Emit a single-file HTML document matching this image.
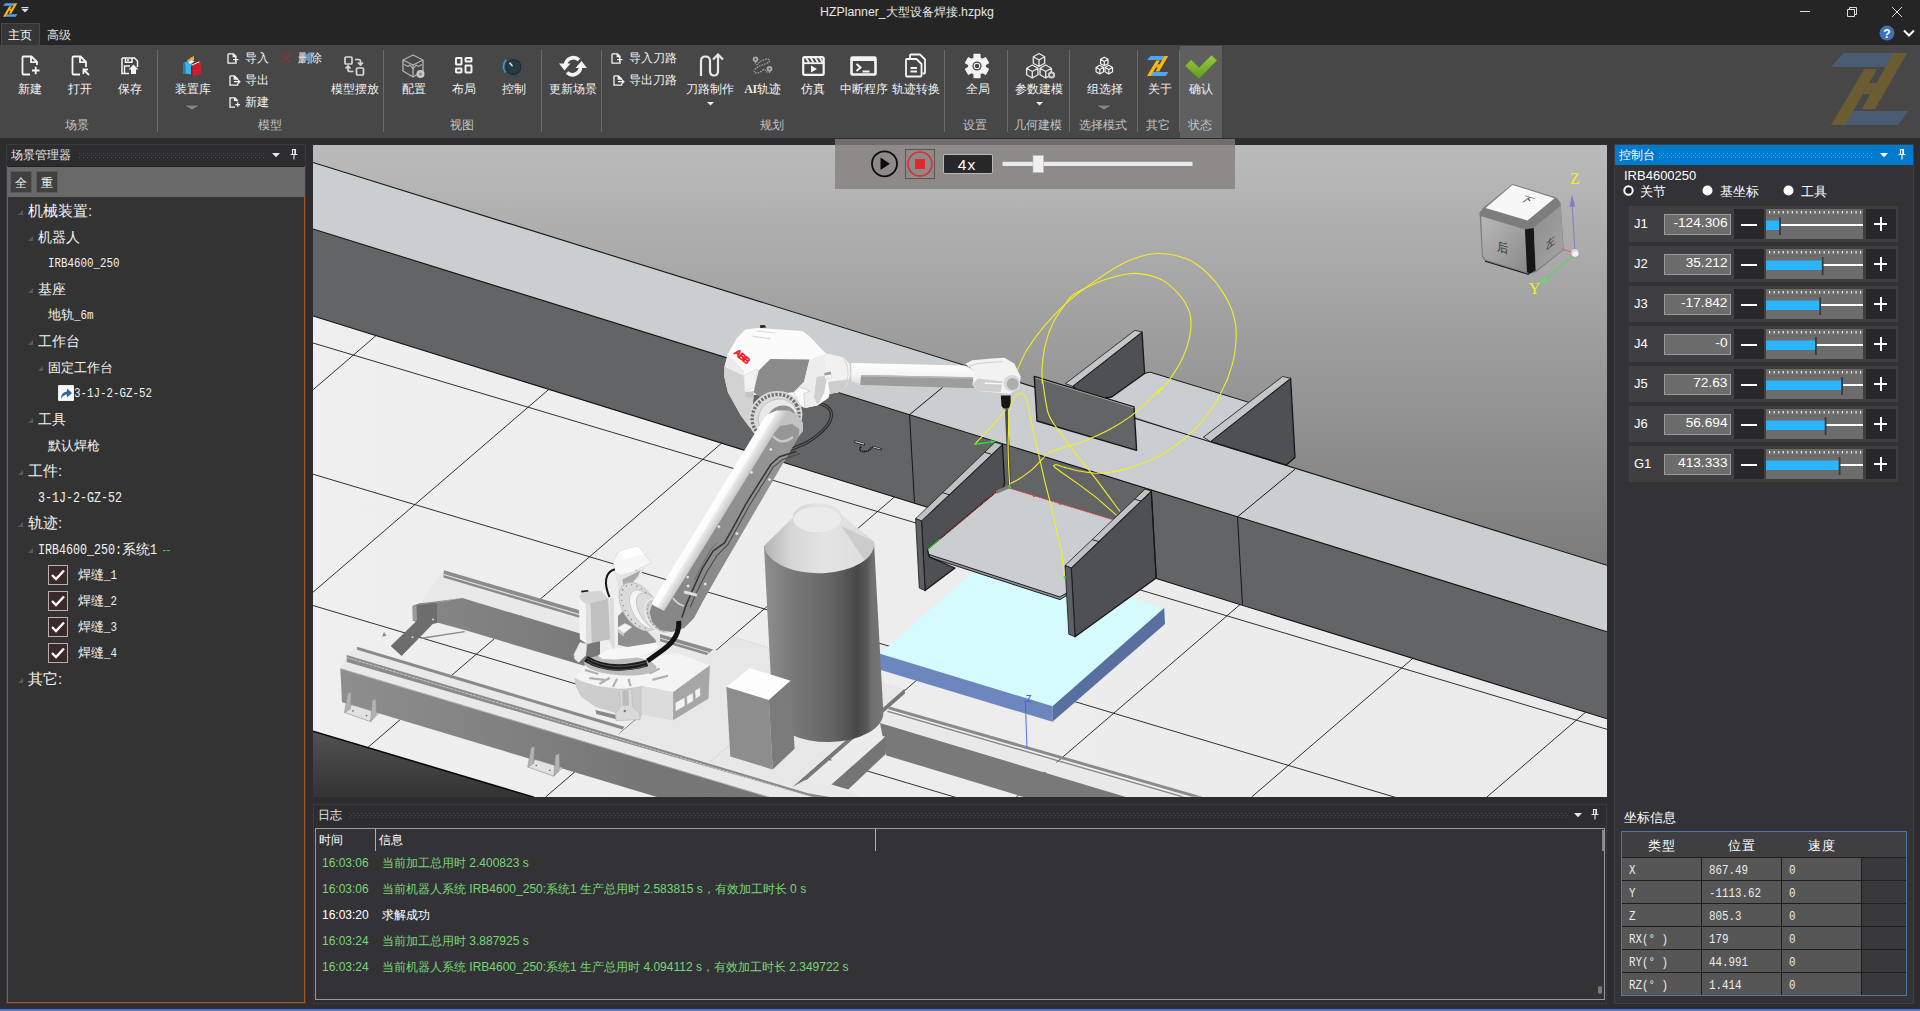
<!DOCTYPE html>
<html lang="zh"><head><meta charset="utf-8"><title>HZPlanner</title>
<style>

*{margin:0;padding:0;box-sizing:border-box}
html,body{width:1920px;height:1011px;overflow:hidden;background:#2d2d30}
body{position:relative;font-family:"Liberation Sans",sans-serif;font-size:13px;color:#f0f0f0;line-height:1}
.a{position:absolute}
.t{position:absolute;white-space:nowrap;line-height:1;transform:translateY(-50%)}
.tc{position:absolute;white-space:nowrap;line-height:1;transform:translate(-50%,-50%)}
.tr{position:absolute;white-space:nowrap;line-height:1;transform:translate(-100%,-50%)}
.mono{font-family:"Liberation Mono",monospace;display:inline-block;transform:scaleX(.833);transform-origin:0 50%}
svg{position:absolute;overflow:visible}
#titlebar{left:0;top:0;width:1920px;height:45px;background:#252526}
#ribbon{left:0;top:45px;width:1920px;height:93px;background:#474747}
.sep{position:absolute;top:50px;width:1px;height:82px;background:#6b6b6b}
.glabel{color:#c4c4c4;font-size:13px}
.blabel{color:#f2f2f2;font-size:13px}
.grip{position:absolute;height:5px;background-image:radial-gradient(circle at .5px .5px,#4b4b50 .55px,transparent .75px),radial-gradient(circle at .5px .5px,#4b4b50 .55px,transparent .75px);background-size:4px 4px,4px 4px;background-position:0 0,2px 2px}
.hdr{position:absolute;color:#e6e6e6;font-size:12px}
.jrow{position:absolute;left:1629px;width:269px;height:36px;background:#3f3f42}
.jval{position:absolute;left:35px;top:8px;width:67px;height:21px;background:#6c6c6c;border:1px solid #9a9a9a}
.jbtn{position:absolute;top:3px;width:30px;height:30px;background:#28282a}
.jsl{position:absolute;left:137px;top:3px;width:97px;height:30px;background:#6c6c6c}
.cb{position:absolute;left:48px;width:20px;height:20px;background:#3c2a2a;border:1px solid #b9b0b0}
.cell{position:absolute;height:22px;background:#565656}

</style></head>
<body>
<div id="titlebar" class="a"></div>
<svg style="left:3px;top:3px" width="14.5" height="14" viewBox="0 0 868 809"><g opacity="1"><polygon points="140,0 702,0 614,157 0,157" fill="#4da6f5"/><polygon points="250,652 868,652 753,809 159,809" fill="#4da6f5"/><polygon points="700,0 856,0 493,630 348,630" fill="#f9b913"/><polygon points="373,180 518,180 161,809 0,809" fill="#f9b913"/><polygon points="429,337 514,337 444,462 356,462" fill="#f9b913"/></g></svg>
<svg style="left:21px;top:7px" width="8" height="6" viewBox="0 0 8 6"><rect x="0.5" y="0" width="7" height="1.2" fill="#ddd"/><polygon points="0.5,2 7.5,2 4,5.6" fill="#ddd"/></svg>
<div class="tc " style="left:907px;top:12px;color:#e8e8e8;font-size:12.3px">HZPlanner_大型设备焊接.hzpkg</div>
<svg style="left:1799px;top:5px" width="110" height="16" viewBox="0 0 110 16"><path d="M1 6.5H11" stroke="#ddd" stroke-width="1"/><path d="M48.5 4.5H55.5V11.5H48.5ZM50.5 4.5V2.5H57.5V9.5H55.5" stroke="#ddd" stroke-width="1" fill="none"/><path d="M93 2L103 12M103 2L93 12" stroke="#ddd" stroke-width="1"/></svg>
<svg style="left:1879px;top:25px" width="36" height="16" viewBox="0 0 36 16"><circle cx="8" cy="8" r="7.5" fill="#3d72b8"/><text x="8" y="12.5" font-family="Liberation Sans" font-weight="bold" font-size="12" fill="#fff" text-anchor="middle">?</text><path d="M25 5.5L30 10.5L35 5.5" stroke="#fff" stroke-width="2" fill="none"/></svg>
<div class="a" style="left:1px;top:23px;width:39px;height:23px;background:#363636;border:1px solid #484848;border-bottom:none"></div>
<div class="t " style="left:8px;top:34.5px;color:#fff;font-size:12px">主页</div>
<div class="t " style="left:47px;top:34.5px;color:#ddd;font-size:12px">高级</div>
<div id="ribbon" class="a"></div>
<div class="a" style="left:1180px;top:46px;width:42px;height:92px;background:#5f5f5f"></div>
<div class="sep" style="left:157px"></div>
<div class="sep" style="left:383px"></div>
<div class="sep" style="left:541px"></div>
<div class="sep" style="left:601px"></div>
<div class="sep" style="left:944px"></div>
<div class="sep" style="left:1007px"></div>
<div class="sep" style="left:1069px"></div>
<div class="sep" style="left:1137px"></div>
<div class="sep" style="left:1179px"></div>
<svg style="left:20px;top:55px" width="20" height="22" viewBox="0 0 20 22"><path d="M17 10V7L11.5 1.5H3.5Q2.5 1.5 2.5 2.5V18.5Q2.5 19.5 3.5 19.5H10M11 1.8V7.2H16.6" fill="none" stroke="#f4f4f4" stroke-width="1.8" stroke-linejoin="round"/><path d="M12 15.5H19.5M15.7 11.8V19.3" stroke="#f4f4f4" stroke-width="1.8"/></svg>
<div class="tc blabel" style="left:30px;top:89px;font-size:12px">新建</div>
<svg style="left:70px;top:55px" width="20" height="22" viewBox="0 0 20 22"><path d="M16 12V7L10.5 1.5H3.5Q2.5 1.5 2.5 2.5V18.5Q2.5 19.5 3.5 19.5H10M10 1.8V7.2H15.6" fill="none" stroke="#f4f4f4" stroke-width="1.8" stroke-linejoin="round"/><path d="M13.5 19V14.5H18M13.8 14.8L19 20" stroke="#f4f4f4" stroke-width="1.8" fill="none"/></svg>
<div class="tc blabel" style="left:79.5px;top:89px;font-size:12px">打开</div>
<svg style="left:121px;top:57px" width="18" height="18" viewBox="0 0 18 18"><path d="M1 1H13.5L16.5 4V10M8 16.5H1V1M4.5 1.3V5.2H11V1.3M7 2V4" fill="none" stroke="#f4f4f4" stroke-width="1.5"/><path d="M3.5 16V9H9" stroke="#f4f4f4" stroke-width="1.4" fill="none"/><path d="M12.5 7.5L17.5 12.5H15V17H10V12.5H7.5Z" fill="#f4f4f4"/></svg>
<div class="tc blabel" style="left:129.5px;top:89px;font-size:12px">保存</div>
<div class="tc glabel" style="left:77px;top:125px;font-size:12px">场景</div>
<svg style="left:183px;top:55px" width="19" height="22" viewBox="0 0 19 22"><polygon points="4,5 9,2.5 9,5.5 6,7.5" fill="#f39a1e"/><polygon points="7,3 11,1 11,5 8,6" fill="#f7a823"/><polygon points="0.5,8 6,5.5 8.5,7 8.5,19.5 2.5,18.5 0.5,19" fill="#39b6e6"/><polygon points="0.5,8 2.5,8.5 2.5,18.8 0.5,19" fill="#1c7fa8"/><polygon points="5,7 9,5 11.5,6.5 7.5,9" fill="#eaf6fb"/><polygon points="8,10 16,6.5 18,7.5 18,19 9.5,21.5 8,20.5" fill="#c8202c"/><polygon points="8,10 9.5,11 9.5,21.5 8,20.5" fill="#8e1520"/><polygon points="8,10 16,6.5 17,7 9,10.6" fill="#fff"/></svg>
<div class="tc blabel" style="left:192.5px;top:89px;font-size:12px">装置库</div>
<svg style="left:182px;top:105px" width="20" height="6" viewBox="0 0 20 6"><polygon points="0,0 20,0 10,5" fill="#3a3a3a"/><polygon points="3,0.5 17,0.5 10,4.5" fill="#8a8a8a"/></svg>
<svg style="left:227px;top:53px" width="12" height="11" viewBox="0 0 12 11"><path d="M1 .8H6.5L9 3.3V5M9 8v2.2H1V.8M6.3 1v2.6H9" fill="none" stroke="#f4f4f4" stroke-width="1.3"/><path d="M6 6.6H11.5M8.7 4.6V8.6" stroke="#f4f4f4" stroke-width="1.3" fill="none"/></svg>
<div class="t blabel" style="left:245px;top:58px;font-size:12px">导入</div>
<svg style="left:229px;top:75px" width="12" height="11" viewBox="0 0 12 11"><path d="M1 .8H5.5L8.6 4V5M8.6 8.4v1.8H1V.8M5.3 1v3H8.4" fill="none" stroke="#f4f4f4" stroke-width="1.3"/><path d="M5 6.7H10.6M9 4.9L10.9 6.7L9 8.5" stroke="#f4f4f4" stroke-width="1.3" fill="none"/></svg>
<div class="t blabel" style="left:245px;top:80px;font-size:12px">导出</div>
<svg style="left:229px;top:97px" width="12" height="11" viewBox="0 0 12 11"><path d="M8.2 4.4V3.2L6 .8H1V10.2H6M5.6 1v2.4H8" fill="none" stroke="#f4f4f4" stroke-width="1.3"/><path d="M6.4 7.6H11M8.7 5.4V9.8" stroke="#f4f4f4" stroke-width="1.3" fill="none"/></svg>
<div class="t blabel" style="left:245px;top:102px;font-size:12px">新建</div>
<svg style="left:281px;top:53px" width="10" height="10" viewBox="0 0 10 10"><path d="M1 1L9.5 9.5M9.5 1L1 9.5" stroke="#e01818" stroke-width=".9"/></svg>
<div class="t blabel" style="left:297.5px;top:58px;font-size:12px">删除</div>
<svg style="left:344px;top:56px" width="21" height="20" viewBox="0 0 21 20"><g fill="none" stroke="#d8d8d8" stroke-width="1.7"><rect x="1" y="1" width="7" height="7" rx="1"/><rect x="12.5" y="12" width="7" height="7" rx="1"/><path d="M11 3.5H14.5Q16.5 3.5 16.5 5.5V8.5M14 6.5L16.5 9L19 6.5"/><path d="M9.5 15.5H6Q4 15.5 4 13.5V10.5M1.5 12.5L4 10L6.5 12.5"/></g></svg>
<div class="tc blabel" style="left:354.5px;top:89px;font-size:12px">模型摆放</div>
<div class="tc glabel" style="left:269.5px;top:125px;font-size:12px">模型</div>
<svg style="left:402px;top:54px" width="24" height="25" viewBox="0 0 24 25"><g fill="none" stroke="#b4b4b4" stroke-width="1.3" stroke-linejoin="round"><path d="M11 1L21 6V17L11 23L1 17V6Z"/><path d="M1 6L11 11L21 6M11 11V23"/><path d="M2 10.5L6 12.5L8 11L11 15L14 11L16.5 12.5L20 10.5" stroke-width="1.1"/></g><circle cx="18.5" cy="20" r="4" fill="#c8c8c8"/><circle cx="18.5" cy="20" r="1.6" fill="#8c8c8c"/></svg>
<div class="tc blabel" style="left:413.5px;top:89px;font-size:12px">配置</div>
<svg style="left:455px;top:57px" width="18" height="17" viewBox="0 0 18 17"><g fill="none" stroke="#f4f4f4" stroke-width="1.9"><rect x="1" y="1" width="5.5" height="6.5" rx=".5"/><rect x="10.5" y="1" width="6" height="3.5" rx=".5"/><rect x="1" y="11.5" width="5.5" height="4" rx=".5"/><rect x="10.5" y="8.5" width="6" height="7" rx=".5"/></g></svg>
<div class="tc blabel" style="left:463.5px;top:89px;font-size:12px">布局</div>
<svg style="left:502px;top:55px" width="24" height="24" viewBox="0 0 24 24"><circle cx="11.5" cy="12" r="10.5" fill="none" stroke="#3b4a52" stroke-width="1.2"/><path d="M3.2 17.5A10.3 10.3 0 0 1 4.3 4.6" fill="none" stroke="#2a9fd8" stroke-width="1.6"/><circle cx="11.5" cy="12" r="8" fill="#1b2a31"/><circle cx="11.5" cy="12" r="7" fill="#263a44"/><path d="M8 8.2L10 10.6" stroke="#dfe6ea" stroke-width="1.6" stroke-linecap="round"/></svg>
<div class="tc blabel" style="left:513.5px;top:89px;font-size:12px">控制</div>
<div class="tc glabel" style="left:461.5px;top:125px;font-size:12px">视图</div>
<svg style="left:558px;top:54px" width="30" height="24" viewBox="0 0 30 24"><g fill="none" stroke="#f4f4f4" stroke-width="3.6"><path d="M7.5 11A8 8 0 0 1 21 6"/><path d="M22.5 12.5A8 8 0 0 1 9 18.5"/></g><polygon points="1,9.5 12.5,9.5 6.5,16.5" fill="#f4f4f4"/><polygon points="17.5,14 29,14 23.5,7" fill="#f4f4f4"/></svg>
<div class="tc blabel" style="left:572.5px;top:89px;font-size:12px">更新场景</div>
<svg style="left:611px;top:53px" width="12" height="11" viewBox="0 0 12 11"><path d="M1 .8H6.5L9 3.3V5M9 8v2.2H1V.8M6.3 1v2.6H9" fill="none" stroke="#f4f4f4" stroke-width="1.3"/><path d="M6 6.6H11.5M8.7 4.6V8.6" stroke="#f4f4f4" stroke-width="1.3" fill="none"/></svg>
<div class="t blabel" style="left:628.5px;top:58px;font-size:12px">导入刀路</div>
<svg style="left:613px;top:75px" width="12" height="11" viewBox="0 0 12 11"><path d="M1 .8H5.5L8.6 4V5M8.6 8.4v1.8H1V.8M5.3 1v3H8.4" fill="none" stroke="#f4f4f4" stroke-width="1.3"/><path d="M5 6.7H10.6M9 4.9L10.9 6.7L9 8.5" stroke="#f4f4f4" stroke-width="1.3" fill="none"/></svg>
<div class="t blabel" style="left:628.5px;top:80px;font-size:12px">导出刀路</div>
<svg style="left:698px;top:52px" width="27" height="26" viewBox="0 0 27 26"><path d="M3 24V9Q3 4.5 7.5 4.5Q12 4.5 12 9V19Q12 23.5 16 23.5Q20 23.5 20 19V3M15 7.5L20 2.5L25 7.5" fill="none" stroke="#e8e8e8" stroke-width="2.2"/></svg>
<div class="tc blabel" style="left:709.75px;top:89px;font-size:12px">刀路制作</div>
<svg style="left:707px;top:101.5px" width="7" height="4" viewBox="0 0 7 4"><polygon points="0,0 7,0 3.5,3.6" fill="#eee"/></svg>
<svg style="left:752px;top:55px" width="22" height="21" viewBox="0 0 22 21"><g fill="none" stroke="#a8a8a8" stroke-width="1.2"><path d="M3.5 2A2.3 2.3 0 0 1 3.5 6.6L3.5 8.5L3.5 6.6A2.3 2.3 0 0 1 3.5 2Z" fill="#a8a8a8"/><path d="M17.5 11.5A2.3 2.3 0 0 1 17.5 16.1L17.5 18L17.5 16.100A2.3 2.3 0 0 1 17.5 11.5Z" fill="#a8a8a8"/><path d="M4.5 10Q8 6 13 4.5Q17 3.5 17.500 5.500Q18 7.500 13 9Q6 11 3 14.500Q1 17.500 4 18Q8 18 10 15.500Q13 13 15 17.500" stroke-dasharray="1.6 1"/></g><circle cx="3.5" cy="4.300" r=".9" fill="#474747"/><circle cx="17.5" cy="13.8" r=".9" fill="#474747"/></svg>
<div class="tc blabel" style="left:762.5px;top:89px;font-size:12px"><span style="font-family:'Liberation Serif',serif;font-weight:bold;font-size:12px;letter-spacing:-.5px;color:#f0e6e0">AI</span>轨迹</div>
<svg style="left:802px;top:56px" width="23" height="20" viewBox="0 0 23 20"><rect x="1.2" y="1.2" width="20.5" height="17.6" rx="1.5" fill="none" stroke="#f4f4f4" stroke-width="2.2"/><path d="M1 7.2H22" stroke="#f4f4f4" stroke-width="1.8"/><path d="M4 1.5L7 6.5M8.5 1.5L11.5 6.5M13 1.5L16 6.5M17.5 1.5L20.5 6.5" stroke="#f4f4f4" stroke-width="1.8"/><polygon points="9,9.5 15,13 9,16.5" fill="#f4f4f4"/></svg>
<div class="tc blabel" style="left:812.5px;top:89px;font-size:12px">仿真</div>
<svg style="left:850px;top:56px" width="27" height="20" viewBox="0 0 27 20"><rect x="1.5" y="1.5" width="24" height="17" rx="1" fill="none" stroke="#f4f4f4" stroke-width="2.6"/><rect x="1.500" y="1.500" width="24" height="3.5" fill="#f4f4f4"/><path d="M6.5 8L10.5 11.5L6.5 15" stroke="#f4f4f4" stroke-width="2" fill="none"/><path d="M12.5 15.5H19.5" stroke="#f4f4f4" stroke-width="2"/></svg>
<div class="tc blabel" style="left:864px;top:89px;font-size:12px">中断程序</div>
<svg style="left:904px;top:53px" width="23" height="25" viewBox="0 0 23 25"><g fill="none" stroke="#f4f4f4" stroke-width="1.8" stroke-linejoin="round"><path d="M6 5.500V2.500Q6 1.500 7 1.500H16L21 6.500V19.500Q21 20.500 20 20.500H18.500"/><path d="M2 7Q2 6 3 6H12.500L17.500 11V22.500Q17.500 23.500 16.500 23.500H3Q2 23.500 2 22.500Z"/><path d="M6.5 15H13M6.5 18.500H13"/></g></svg>
<div class="tc blabel" style="left:915.5px;top:89px;font-size:12px">轨迹转换</div>
<div class="tc glabel" style="left:772px;top:125px;font-size:12px">规划</div>
<svg style="left:965px;top:54px" width="24" height="24" viewBox="0 0 24 24"><polygon points="9.16,4.20 9.15,0.55 14.85,0.55 14.84,4.20 17.34,5.64 20.49,3.80 23.34,8.75 20.17,10.56 20.17,13.44 23.34,15.25 20.49,20.20 17.34,18.36 14.84,19.80 14.85,23.45 9.15,23.45 9.16,19.80 6.66,18.36 3.51,20.20 0.66,15.25 3.83,13.44 3.83,10.56 0.66,8.75 3.51,3.80 6.66,5.64" fill="#f4f4f4" stroke="#f4f4f4" stroke-width="1.5" stroke-linejoin="round"/><circle cx="12" cy="12" r="4.6" fill="#474747"/><circle cx="12" cy="12" r="2.6" fill="#f4f4f4"/><circle cx="12" cy="12" r="2.500" fill="none" stroke="#f4f4f4" stroke-width="1.6"/><circle cx="12" cy="12" r="2.2" fill="#474747"/></svg>
<div class="tc blabel" style="left:977.5px;top:89px;font-size:12px">全局</div>
<div class="tc glabel" style="left:975px;top:125px;font-size:12px">设置</div>
<svg style="left:1025px;top:52px" width="32" height="28" viewBox="0 0 32 28"><path d="M14 1.5L19.66 4.75V11.25L14 14.5L8.34 11.25V4.75ZM8.34 4.75L14 8L19.66 4.75M14 8V14.5" fill="none" stroke="#e4e4e4" stroke-width="1.4" stroke-linejoin="round"/><path d="M7.3 13.0L12.96 16.25V22.75L7.3 26.0L1.64 22.75V16.25ZM1.64 16.25L7.3 19.5L12.96 16.25M7.3 19.5V26.0" fill="none" stroke="#e4e4e4" stroke-width="1.4" stroke-linejoin="round"/><path d="M20.7 13.0L26.36 16.25V22.75L20.7 26.0L15.04 22.75V16.25ZM15.04 16.25L20.7 19.5L26.36 16.25M20.7 19.5V26.0" fill="none" stroke="#e4e4e4" stroke-width="1.4" stroke-linejoin="round"/><circle cx="26.500" cy="23" r="3.6" fill="#d0d0d0"/><circle cx="26.500" cy="23" r="1.5" fill="#474747"/></svg>
<div class="tc blabel" style="left:1038.5px;top:89px;font-size:12px">参数建模</div>
<svg style="left:1036px;top:101.5px" width="7" height="4" viewBox="0 0 7 4"><polygon points="0,0 7,0 3.5,3.6" fill="#eee"/></svg>
<div class="tc glabel" style="left:1037.5px;top:125px;font-size:12px">几何建模</div>
<svg style="left:1095px;top:56px" width="19" height="20" viewBox="0 0 19 20"><path d="M9.3 1.2000000000000002L13.04 3.35V7.65L9.3 9.8L5.56 7.65V3.35ZM5.56 3.35L9.3 5.5L13.04 3.35M9.3 5.5V9.8" fill="none" stroke="#f4f4f4" stroke-width="1.2" stroke-linejoin="round"/><path d="M4.8 9.3L8.54 11.45V15.75L4.8 17.9L1.06 15.75V11.45ZM1.06 11.45L4.8 13.6L8.54 11.45M4.8 13.6V17.9" fill="none" stroke="#f4f4f4" stroke-width="1.2" stroke-linejoin="round"/><path d="M13.8 9.3L17.54 11.45V15.75L13.8 17.9L10.06 15.75V11.45ZM10.06 11.45L13.8 13.6L17.54 11.45M13.8 13.6V17.9" fill="none" stroke="#f4f4f4" stroke-width="1.2" stroke-linejoin="round"/></svg>
<div class="tc blabel" style="left:1104.5px;top:89px;font-size:12px">组选择</div>
<svg style="left:1093.5px;top:105px" width="20" height="6" viewBox="0 0 20 6"><polygon points="0,0 20,0 10,5" fill="#3a3a3a"/><polygon points="3,0.5 17,0.5 10,4.5" fill="#8a8a8a"/></svg>
<div class="tc glabel" style="left:1102.5px;top:125px;font-size:12px">选择模式</div>
<svg style="left:1147px;top:56px" width="21.5" height="20" viewBox="0 0 868 809"><g opacity="1"><polygon points="140,0 702,0 614,157 0,157" fill="#4da6f5"/><polygon points="250,652 868,652 753,809 159,809" fill="#4da6f5"/><polygon points="700,0 856,0 493,630 348,630" fill="#f9b913"/><polygon points="373,180 518,180 161,809 0,809" fill="#f9b913"/><polygon points="429,337 514,337 444,462 356,462" fill="#f9b913"/></g></svg>
<div class="tc blabel" style="left:1159.5px;top:89px;font-size:12px">关于</div>
<div class="tc glabel" style="left:1157.5px;top:125px;font-size:12px">其它</div>
<svg style="left:1185px;top:55px" width="32" height="25" viewBox="0 0 32 25"><defs><linearGradient id="gchk" x1="0" y1="0" x2="0" y2="1"><stop offset="0" stop-color="#9ccb4a"/><stop offset="1" stop-color="#5f9a1c"/></linearGradient></defs><polygon points="0,11 6,4.5 14,12.5 26.500,0 32,5.5 14,24" fill="url(#gchk)" stroke="#4f8216" stroke-width=".6"/></svg>
<div class="tc blabel" style="left:1201px;top:89px;font-size:12px">确认</div>
<div class="tc glabel" style="left:1199.5px;top:125px;font-size:12px">状态</div>
<svg style="left:1831px;top:53px" width="77.3" height="72" viewBox="0 0 868 809"><g opacity="1"><polygon points="140,0 702,0 614,157 0,157" fill="#4a5c72"/><polygon points="250,652 868,652 753,809 159,809" fill="#4a5c72"/><polygon points="700,0 856,0 493,630 348,630" fill="#6b5c33"/><polygon points="373,180 518,180 161,809 0,809" fill="#6b5c33"/><polygon points="429,337 514,337 444,462 356,462" fill="#6b5c33"/></g></svg>
<div class="a" style="left:6px;top:144px;width:300px;height:860px;background:#2d2d30;border:1px solid #3b3b3f"></div>
<div class="t hdr" style="left:11px;top:154.5px;">场景管理器</div>
<div class="grip" style="left:79px;top:153px;width:186px"></div>
<svg style="left:272px;top:153px" width="8" height="5" viewBox="0 0 8 5"><polygon points="0,0 8,0 4,4.2" fill="#e8e8e8"/></svg>
<svg style="left:290px;top:149px" width="8" height="11" viewBox="0 0 8 11"><path d="M2 .5H6M2.500 .5V5.500M5.500 .5V5.500M.5 5.500H7.500M4 5.500V10.500" stroke="#e8e8e8" stroke-width="1.1" fill="none"/><rect x="4.300" y=".5" width="1.4" height="5" fill="#e8e8e8"/></svg>
<div class="a" style="left:7px;top:166px;width:298px;height:837px;background:#333333;border:1px solid #a85626;border-top:1px solid #202020"></div>
<div class="a" style="left:7px;top:167px;width:298px;height:30px;background:#696969"></div>
<div class="a" style="left:10px;top:171px;width:22px;height:22px;background:#404040;border:1px solid #5a5a5a"></div>
<div class="tc " style="left:21px;top:182.5px;font-size:12px;color:#f4f4f4">全</div>
<div class="a" style="left:36px;top:171px;width:22px;height:22px;background:#404040;border:1px solid #5a5a5a"></div>
<div class="tc " style="left:47px;top:182.5px;font-size:12px;color:#f4f4f4">重</div>
<svg style="left:18px;top:210px" width="5" height="5" viewBox="0 0 5 5"><polygon points="5,0 5,5 0,5" fill="#5a5a5a"/></svg>
<div class="t " style="left:28px;top:210px;font-size:15px;color:#f2f2f2">机械装置:</div>
<svg style="left:28px;top:236px" width="5" height="5" viewBox="0 0 5 5"><polygon points="5,0 5,5 0,5" fill="#5a5a5a"/></svg>
<div class="t " style="left:38px;top:237px;font-size:14px;color:#f2f2f2">机器人</div>
<div class="t " style="left:48px;top:263px;font-size:13px;color:#f2f2f2"><span class="mono">IRB4600_250</span></div>
<svg style="left:28px;top:288px" width="5" height="5" viewBox="0 0 5 5"><polygon points="5,0 5,5 0,5" fill="#5a5a5a"/></svg>
<div class="t " style="left:38px;top:289px;font-size:14px;color:#f2f2f2">基座</div>
<div class="t " style="left:48px;top:315px;font-size:13px;color:#f2f2f2">地轨<span class="mono">_6m</span></div>
<svg style="left:28px;top:340px" width="5" height="5" viewBox="0 0 5 5"><polygon points="5,0 5,5 0,5" fill="#5a5a5a"/></svg>
<div class="t " style="left:38px;top:341px;font-size:14px;color:#f2f2f2">工作台</div>
<svg style="left:38px;top:366px" width="5" height="5" viewBox="0 0 5 5"><polygon points="5,0 5,5 0,5" fill="#5a5a5a"/></svg>
<div class="t " style="left:48px;top:367px;font-size:13px;color:#f2f2f2">固定工作台</div>
<svg style="left:58px;top:385px" width="16" height="16" viewBox="0 0 16 16"><rect width="16" height="16" rx="1" fill="#e9edf2"/><rect x="1" y="1" width="14" height="14" fill="#f8f9fb"/><path d="M3 14Q3 7 9 6.500V3.500L14 8L9 12.500V9.500Q5.500 9.500 3 14Z" fill="#2f63a8"/></svg>
<div class="t " style="left:74px;top:393px;font-size:13px;color:#f2f2f2"><span class="mono">3-1J-2-GZ-52</span></div>
<svg style="left:28px;top:418px" width="5" height="5" viewBox="0 0 5 5"><polygon points="5,0 5,5 0,5" fill="#5a5a5a"/></svg>
<div class="t " style="left:38px;top:419px;font-size:14px;color:#f2f2f2">工具</div>
<div class="t " style="left:48px;top:445px;font-size:13px;color:#f2f2f2">默认焊枪</div>
<svg style="left:18px;top:470px" width="5" height="5" viewBox="0 0 5 5"><polygon points="5,0 5,5 0,5" fill="#5a5a5a"/></svg>
<div class="t " style="left:28px;top:470px;font-size:15px;color:#f2f2f2">工件:</div>
<div class="t " style="left:38px;top:497px;font-size:14px;color:#f2f2f2"><span class="mono">3-1J-2-GZ-52</span></div>
<svg style="left:18px;top:522px" width="5" height="5" viewBox="0 0 5 5"><polygon points="5,0 5,5 0,5" fill="#5a5a5a"/></svg>
<div class="t " style="left:28px;top:522px;font-size:15px;color:#f2f2f2">轨迹:</div>
<svg style="left:28px;top:548px" width="5" height="5" viewBox="0 0 5 5"><polygon points="5,0 5,5 0,5" fill="#5a5a5a"/></svg>
<div class="t " style="left:38px;top:549px;font-size:14px;color:#f2f2f2"><span class="mono">IRB4600_250:</span><span style="margin-left:-16.8px">系统</span><span class="mono">1</span><span style="margin-left:4px;color:#19e019;font-size:12px">--</span></div>
<div class="cb" style="top:565px"></div>
<svg style="left:50px;top:568px" width="16" height="14" viewBox="0 0 16 14"><path d="M2 7L6 11L14 2.500" stroke="#fff" stroke-width="2.3" fill="none"/></svg>
<div class="t " style="left:78px;top:575px;font-size:13px;color:#f2f2f2">焊缝<span class="mono">_1</span></div>
<div class="cb" style="top:591px"></div>
<svg style="left:50px;top:594px" width="16" height="14" viewBox="0 0 16 14"><path d="M2 7L6 11L14 2.500" stroke="#fff" stroke-width="2.3" fill="none"/></svg>
<div class="t " style="left:78px;top:601px;font-size:13px;color:#f2f2f2">焊缝<span class="mono">_2</span></div>
<div class="cb" style="top:617px"></div>
<svg style="left:50px;top:620px" width="16" height="14" viewBox="0 0 16 14"><path d="M2 7L6 11L14 2.500" stroke="#fff" stroke-width="2.3" fill="none"/></svg>
<div class="t " style="left:78px;top:627px;font-size:13px;color:#f2f2f2">焊缝<span class="mono">_3</span></div>
<div class="cb" style="top:643px"></div>
<svg style="left:50px;top:646px" width="16" height="14" viewBox="0 0 16 14"><path d="M2 7L6 11L14 2.500" stroke="#fff" stroke-width="2.3" fill="none"/></svg>
<div class="t " style="left:78px;top:653px;font-size:13px;color:#f2f2f2">焊缝<span class="mono">_4</span></div>
<svg style="left:18px;top:678px" width="5" height="5" viewBox="0 0 5 5"><polygon points="5,0 5,5 0,5" fill="#5a5a5a"/></svg>
<div class="t " style="left:28px;top:678px;font-size:15px;color:#f2f2f2">其它:</div>
<div class="a" style="left:313px;top:804px;width:1294px;height:200px;background:#2d2d30;border:1px solid #3b3b3f"></div>
<div class="t hdr" style="left:318px;top:814.5px;">日志</div>
<div class="grip" style="left:349px;top:813px;width:1220px"></div>
<svg style="left:1574px;top:813px" width="8" height="5" viewBox="0 0 8 5"><polygon points="0,0 8,0 4,4.2" fill="#e8e8e8"/></svg>
<svg style="left:1591px;top:809px" width="8" height="11" viewBox="0 0 8 11"><path d="M2 .5H6M2.500 .5V5.500M5.500 .5V5.500M.5 5.500H7.500M4 5.500V10.500" stroke="#e8e8e8" stroke-width="1.1" fill="none"/><rect x="4.300" y=".5" width="1.4" height="5" fill="#e8e8e8"/></svg>
<div class="a" style="left:315px;top:828px;width:1290px;height:172px;background:#333337;border:1px solid #9a9a9a"></div>
<div class="a" style="left:375px;top:829px;width:1px;height:22px;background:#b0b0b0"></div>
<div class="a" style="left:875px;top:829px;width:1px;height:22px;background:#b0b0b0"></div>
<div class="t " style="left:319px;top:840px;font-size:12px;color:#fff">时间</div>
<div class="t " style="left:379px;top:840px;font-size:12px;color:#fff">信息</div>
<div class="a" style="left:1602px;top:830px;width:2px;height:21px;background:#888"></div>
<div class="a" style="left:1598px;top:986px;width:4px;height:8px;border-radius:2px;background:#7a7a7a"></div>
<div class="t " style="left:322px;top:862.5px;font-size:12px;color:#78d678">16:03:06</div>
<div class="t " style="left:382px;top:862.5px;font-size:12px;color:#78d678">当前加工总用时 2.400823 s</div>
<div class="t " style="left:322px;top:888.5px;font-size:12px;color:#78d678">16:03:06</div>
<div class="t " style="left:382px;top:888.5px;font-size:12px;color:#78d678">当前机器人系统 IRB4600_250:系统1 生产总用时 2.583815 s，有效加工时长 0 s</div>
<div class="t " style="left:322px;top:914.5px;font-size:12px;color:#fff">16:03:20</div>
<div class="t " style="left:382px;top:914.5px;font-size:12px;color:#fff">求解成功</div>
<div class="t " style="left:322px;top:940.5px;font-size:12px;color:#78d678">16:03:24</div>
<div class="t " style="left:382px;top:940.5px;font-size:12px;color:#78d678">当前加工总用时 3.887925 s</div>
<div class="t " style="left:322px;top:966.5px;font-size:12px;color:#78d678">16:03:24</div>
<div class="t " style="left:382px;top:966.5px;font-size:12px;color:#78d678">当前机器人系统 IRB4600_250:系统1 生产总用时 4.094112 s，有效加工时长 2.349722 s</div>
<div class="a" style="left:1614px;top:144px;width:300px;height:860px;background:#333337;border:1px solid #3f3f46"></div>
<div class="a" style="left:1615px;top:145px;width:298px;height:20px;background:#007acc"></div>
<div class="t " style="left:1619px;top:155px;font-size:12px;color:#fff">控制台</div>
<div class="grip" style="left:1659px;top:153px;width:214px;background-image:radial-gradient(circle at .5px .5px,#59a8e0 .55px,transparent .75px),radial-gradient(circle at .5px .5px,#59a8e0 .55px,transparent .75px)"></div>
<svg style="left:1880px;top:153px" width="8" height="5" viewBox="0 0 8 5"><polygon points="0,0 8,0 4,4.2" fill="#fff"/></svg>
<svg style="left:1898px;top:149px" width="8" height="11" viewBox="0 0 8 11"><path d="M2 .5H6M2.500 .5V5.500M5.500 .5V5.500M.5 5.500H7.500M4 5.500V10.500" stroke="#fff" stroke-width="1.1" fill="none"/><rect x="4.300" y=".5" width="1.4" height="5" fill="#fff"/></svg>
<div class="t " style="left:1624px;top:174.5px;font-size:13px;color:#fff">IRB4600250</div>
<svg style="left:1623px;top:185px" width="11" height="11" viewBox="0 0 11 11"><circle cx="5.500" cy="5.500" r="4.200" fill="#222" stroke="#fff" stroke-width="2"/></svg>
<div class="t " style="left:1640px;top:190.5px;font-size:13px;color:#fff">关节</div>
<svg style="left:1702px;top:185px" width="11" height="11" viewBox="0 0 11 11"><circle cx="5.500" cy="5.500" r="5" fill="#fff"/></svg>
<div class="t " style="left:1720px;top:190.5px;font-size:13px;color:#fff">基坐标</div>
<svg style="left:1783px;top:185px" width="11" height="11" viewBox="0 0 11 11"><circle cx="5.500" cy="5.500" r="5" fill="#fff"/></svg>
<div class="t " style="left:1801px;top:190.5px;font-size:13px;color:#fff">工具</div>
<div class="jrow" style="top:206px"><div class="t" style="left:5px;top:17px;font-size:13px;color:#fff">J1</div><div class="jval"></div><div class="tr" style="left:98.5px;top:17px;font-size:13.7px;color:#fff">-124.306</div><div class="jbtn" style="left:105px"></div><div class="a" style="left:112px;top:18px;width:16px;height:2px;background:#fff"></div><div class="jsl"><svg style="left:0;top:0" width="97" height="30"><rect x="3.00" y="2" width="1.2" height="2.500" fill="#f0f0f0"/><rect x="7.55" y="2" width="1.2" height="2.500" fill="#f0f0f0"/><rect x="12.10" y="2" width="1.2" height="2.500" fill="#f0f0f0"/><rect x="16.65" y="2" width="1.2" height="2.500" fill="#f0f0f0"/><rect x="21.20" y="2" width="1.2" height="2.500" fill="#f0f0f0"/><rect x="25.75" y="2" width="1.2" height="2.500" fill="#f0f0f0"/><rect x="30.30" y="2" width="1.2" height="2.500" fill="#f0f0f0"/><rect x="34.85" y="2" width="1.2" height="2.500" fill="#f0f0f0"/><rect x="39.40" y="2" width="1.2" height="2.500" fill="#f0f0f0"/><rect x="43.95" y="2" width="1.2" height="2.500" fill="#f0f0f0"/><rect x="48.50" y="2" width="1.2" height="2.500" fill="#f0f0f0"/><rect x="53.05" y="2" width="1.2" height="2.500" fill="#f0f0f0"/><rect x="57.60" y="2" width="1.2" height="2.500" fill="#f0f0f0"/><rect x="62.15" y="2" width="1.2" height="2.500" fill="#f0f0f0"/><rect x="66.70" y="2" width="1.2" height="2.500" fill="#f0f0f0"/><rect x="71.25" y="2" width="1.2" height="2.500" fill="#f0f0f0"/><rect x="75.80" y="2" width="1.2" height="2.500" fill="#f0f0f0"/><rect x="80.35" y="2" width="1.2" height="2.500" fill="#f0f0f0"/><rect x="84.90" y="2" width="1.2" height="2.500" fill="#f0f0f0"/><rect x="89.45" y="2" width="1.2" height="2.500" fill="#f0f0f0"/><rect x="94.00" y="2" width="1.2" height="2.500" fill="#f0f0f0"/><rect x="13.6" y="15" width="83.4" height="2" fill="#fff"/><rect x="0" y="11.500" width="13.6" height="9.500" fill="#2bb5fc"/><rect x="13.1" y="8" width="1.8" height="18" fill="#3a3a3a"/></svg></div><div class="jbtn" style="left:237px"></div><div class="a" style="left:245px;top:16.500px;width:13px;height:2px;background:#fff"></div><div class="a" style="left:250.500px;top:10.500px;width:2px;height:14px;background:#fff"></div></div>
<div class="jrow" style="top:246px"><div class="t" style="left:5px;top:17px;font-size:13px;color:#fff">J2</div><div class="jval"></div><div class="tr" style="left:98.5px;top:17px;font-size:13.7px;color:#fff">35.212</div><div class="jbtn" style="left:105px"></div><div class="a" style="left:112px;top:18px;width:16px;height:2px;background:#fff"></div><div class="jsl"><svg style="left:0;top:0" width="97" height="30"><rect x="3.00" y="2" width="1.2" height="2.500" fill="#f0f0f0"/><rect x="7.55" y="2" width="1.2" height="2.500" fill="#f0f0f0"/><rect x="12.10" y="2" width="1.2" height="2.500" fill="#f0f0f0"/><rect x="16.65" y="2" width="1.2" height="2.500" fill="#f0f0f0"/><rect x="21.20" y="2" width="1.2" height="2.500" fill="#f0f0f0"/><rect x="25.75" y="2" width="1.2" height="2.500" fill="#f0f0f0"/><rect x="30.30" y="2" width="1.2" height="2.500" fill="#f0f0f0"/><rect x="34.85" y="2" width="1.2" height="2.500" fill="#f0f0f0"/><rect x="39.40" y="2" width="1.2" height="2.500" fill="#f0f0f0"/><rect x="43.95" y="2" width="1.2" height="2.500" fill="#f0f0f0"/><rect x="48.50" y="2" width="1.2" height="2.500" fill="#f0f0f0"/><rect x="53.05" y="2" width="1.2" height="2.500" fill="#f0f0f0"/><rect x="57.60" y="2" width="1.2" height="2.500" fill="#f0f0f0"/><rect x="62.15" y="2" width="1.2" height="2.500" fill="#f0f0f0"/><rect x="66.70" y="2" width="1.2" height="2.500" fill="#f0f0f0"/><rect x="71.25" y="2" width="1.2" height="2.500" fill="#f0f0f0"/><rect x="75.80" y="2" width="1.2" height="2.500" fill="#f0f0f0"/><rect x="80.35" y="2" width="1.2" height="2.500" fill="#f0f0f0"/><rect x="84.90" y="2" width="1.2" height="2.500" fill="#f0f0f0"/><rect x="89.45" y="2" width="1.2" height="2.500" fill="#f0f0f0"/><rect x="94.00" y="2" width="1.2" height="2.500" fill="#f0f0f0"/><rect x="56.3" y="15" width="40.7" height="2" fill="#fff"/><rect x="0" y="11.500" width="56.3" height="9.500" fill="#2bb5fc"/><rect x="55.8" y="8" width="1.8" height="18" fill="#3a3a3a"/></svg></div><div class="jbtn" style="left:237px"></div><div class="a" style="left:245px;top:16.500px;width:13px;height:2px;background:#fff"></div><div class="a" style="left:250.500px;top:10.500px;width:2px;height:14px;background:#fff"></div></div>
<div class="jrow" style="top:286px"><div class="t" style="left:5px;top:17px;font-size:13px;color:#fff">J3</div><div class="jval"></div><div class="tr" style="left:98.5px;top:17px;font-size:13.7px;color:#fff">-17.842</div><div class="jbtn" style="left:105px"></div><div class="a" style="left:112px;top:18px;width:16px;height:2px;background:#fff"></div><div class="jsl"><svg style="left:0;top:0" width="97" height="30"><rect x="3.00" y="2" width="1.2" height="2.500" fill="#f0f0f0"/><rect x="7.55" y="2" width="1.2" height="2.500" fill="#f0f0f0"/><rect x="12.10" y="2" width="1.2" height="2.500" fill="#f0f0f0"/><rect x="16.65" y="2" width="1.2" height="2.500" fill="#f0f0f0"/><rect x="21.20" y="2" width="1.2" height="2.500" fill="#f0f0f0"/><rect x="25.75" y="2" width="1.2" height="2.500" fill="#f0f0f0"/><rect x="30.30" y="2" width="1.2" height="2.500" fill="#f0f0f0"/><rect x="34.85" y="2" width="1.2" height="2.500" fill="#f0f0f0"/><rect x="39.40" y="2" width="1.2" height="2.500" fill="#f0f0f0"/><rect x="43.95" y="2" width="1.2" height="2.500" fill="#f0f0f0"/><rect x="48.50" y="2" width="1.2" height="2.500" fill="#f0f0f0"/><rect x="53.05" y="2" width="1.2" height="2.500" fill="#f0f0f0"/><rect x="57.60" y="2" width="1.2" height="2.500" fill="#f0f0f0"/><rect x="62.15" y="2" width="1.2" height="2.500" fill="#f0f0f0"/><rect x="66.70" y="2" width="1.2" height="2.500" fill="#f0f0f0"/><rect x="71.25" y="2" width="1.2" height="2.500" fill="#f0f0f0"/><rect x="75.80" y="2" width="1.2" height="2.500" fill="#f0f0f0"/><rect x="80.35" y="2" width="1.2" height="2.500" fill="#f0f0f0"/><rect x="84.90" y="2" width="1.2" height="2.500" fill="#f0f0f0"/><rect x="89.45" y="2" width="1.2" height="2.500" fill="#f0f0f0"/><rect x="94.00" y="2" width="1.2" height="2.500" fill="#f0f0f0"/><rect x="53.8" y="15" width="43.2" height="2" fill="#fff"/><rect x="0" y="11.500" width="53.8" height="9.500" fill="#2bb5fc"/><rect x="53.3" y="8" width="1.8" height="18" fill="#3a3a3a"/></svg></div><div class="jbtn" style="left:237px"></div><div class="a" style="left:245px;top:16.500px;width:13px;height:2px;background:#fff"></div><div class="a" style="left:250.500px;top:10.500px;width:2px;height:14px;background:#fff"></div></div>
<div class="jrow" style="top:326px"><div class="t" style="left:5px;top:17px;font-size:13px;color:#fff">J4</div><div class="jval"></div><div class="tr" style="left:98.5px;top:17px;font-size:13.7px;color:#fff">-0</div><div class="jbtn" style="left:105px"></div><div class="a" style="left:112px;top:18px;width:16px;height:2px;background:#fff"></div><div class="jsl"><svg style="left:0;top:0" width="97" height="30"><rect x="3.00" y="2" width="1.2" height="2.500" fill="#f0f0f0"/><rect x="7.55" y="2" width="1.2" height="2.500" fill="#f0f0f0"/><rect x="12.10" y="2" width="1.2" height="2.500" fill="#f0f0f0"/><rect x="16.65" y="2" width="1.2" height="2.500" fill="#f0f0f0"/><rect x="21.20" y="2" width="1.2" height="2.500" fill="#f0f0f0"/><rect x="25.75" y="2" width="1.2" height="2.500" fill="#f0f0f0"/><rect x="30.30" y="2" width="1.2" height="2.500" fill="#f0f0f0"/><rect x="34.85" y="2" width="1.2" height="2.500" fill="#f0f0f0"/><rect x="39.40" y="2" width="1.2" height="2.500" fill="#f0f0f0"/><rect x="43.95" y="2" width="1.2" height="2.500" fill="#f0f0f0"/><rect x="48.50" y="2" width="1.2" height="2.500" fill="#f0f0f0"/><rect x="53.05" y="2" width="1.2" height="2.500" fill="#f0f0f0"/><rect x="57.60" y="2" width="1.2" height="2.500" fill="#f0f0f0"/><rect x="62.15" y="2" width="1.2" height="2.500" fill="#f0f0f0"/><rect x="66.70" y="2" width="1.2" height="2.500" fill="#f0f0f0"/><rect x="71.25" y="2" width="1.2" height="2.500" fill="#f0f0f0"/><rect x="75.80" y="2" width="1.2" height="2.500" fill="#f0f0f0"/><rect x="80.35" y="2" width="1.2" height="2.500" fill="#f0f0f0"/><rect x="84.90" y="2" width="1.2" height="2.500" fill="#f0f0f0"/><rect x="89.45" y="2" width="1.2" height="2.500" fill="#f0f0f0"/><rect x="94.00" y="2" width="1.2" height="2.500" fill="#f0f0f0"/><rect x="49.5" y="15" width="47.5" height="2" fill="#fff"/><rect x="0" y="11.500" width="49.5" height="9.500" fill="#2bb5fc"/><rect x="49.0" y="8" width="1.8" height="18" fill="#3a3a3a"/></svg></div><div class="jbtn" style="left:237px"></div><div class="a" style="left:245px;top:16.500px;width:13px;height:2px;background:#fff"></div><div class="a" style="left:250.500px;top:10.500px;width:2px;height:14px;background:#fff"></div></div>
<div class="jrow" style="top:366px"><div class="t" style="left:5px;top:17px;font-size:13px;color:#fff">J5</div><div class="jval"></div><div class="tr" style="left:98.5px;top:17px;font-size:13.7px;color:#fff">72.63</div><div class="jbtn" style="left:105px"></div><div class="a" style="left:112px;top:18px;width:16px;height:2px;background:#fff"></div><div class="jsl"><svg style="left:0;top:0" width="97" height="30"><rect x="3.00" y="2" width="1.2" height="2.500" fill="#f0f0f0"/><rect x="7.55" y="2" width="1.2" height="2.500" fill="#f0f0f0"/><rect x="12.10" y="2" width="1.2" height="2.500" fill="#f0f0f0"/><rect x="16.65" y="2" width="1.2" height="2.500" fill="#f0f0f0"/><rect x="21.20" y="2" width="1.2" height="2.500" fill="#f0f0f0"/><rect x="25.75" y="2" width="1.2" height="2.500" fill="#f0f0f0"/><rect x="30.30" y="2" width="1.2" height="2.500" fill="#f0f0f0"/><rect x="34.85" y="2" width="1.2" height="2.500" fill="#f0f0f0"/><rect x="39.40" y="2" width="1.2" height="2.500" fill="#f0f0f0"/><rect x="43.95" y="2" width="1.2" height="2.500" fill="#f0f0f0"/><rect x="48.50" y="2" width="1.2" height="2.500" fill="#f0f0f0"/><rect x="53.05" y="2" width="1.2" height="2.500" fill="#f0f0f0"/><rect x="57.60" y="2" width="1.2" height="2.500" fill="#f0f0f0"/><rect x="62.15" y="2" width="1.2" height="2.500" fill="#f0f0f0"/><rect x="66.70" y="2" width="1.2" height="2.500" fill="#f0f0f0"/><rect x="71.25" y="2" width="1.2" height="2.500" fill="#f0f0f0"/><rect x="75.80" y="2" width="1.2" height="2.500" fill="#f0f0f0"/><rect x="80.35" y="2" width="1.2" height="2.500" fill="#f0f0f0"/><rect x="84.90" y="2" width="1.2" height="2.500" fill="#f0f0f0"/><rect x="89.45" y="2" width="1.2" height="2.500" fill="#f0f0f0"/><rect x="94.00" y="2" width="1.2" height="2.500" fill="#f0f0f0"/><rect x="75.7" y="15" width="21.3" height="2" fill="#fff"/><rect x="0" y="11.500" width="75.7" height="9.500" fill="#2bb5fc"/><rect x="75.2" y="8" width="1.8" height="18" fill="#3a3a3a"/></svg></div><div class="jbtn" style="left:237px"></div><div class="a" style="left:245px;top:16.500px;width:13px;height:2px;background:#fff"></div><div class="a" style="left:250.500px;top:10.500px;width:2px;height:14px;background:#fff"></div></div>
<div class="jrow" style="top:406px"><div class="t" style="left:5px;top:17px;font-size:13px;color:#fff">J6</div><div class="jval"></div><div class="tr" style="left:98.5px;top:17px;font-size:13.7px;color:#fff">56.694</div><div class="jbtn" style="left:105px"></div><div class="a" style="left:112px;top:18px;width:16px;height:2px;background:#fff"></div><div class="jsl"><svg style="left:0;top:0" width="97" height="30"><rect x="3.00" y="2" width="1.2" height="2.500" fill="#f0f0f0"/><rect x="7.55" y="2" width="1.2" height="2.500" fill="#f0f0f0"/><rect x="12.10" y="2" width="1.2" height="2.500" fill="#f0f0f0"/><rect x="16.65" y="2" width="1.2" height="2.500" fill="#f0f0f0"/><rect x="21.20" y="2" width="1.2" height="2.500" fill="#f0f0f0"/><rect x="25.75" y="2" width="1.2" height="2.500" fill="#f0f0f0"/><rect x="30.30" y="2" width="1.2" height="2.500" fill="#f0f0f0"/><rect x="34.85" y="2" width="1.2" height="2.500" fill="#f0f0f0"/><rect x="39.40" y="2" width="1.2" height="2.500" fill="#f0f0f0"/><rect x="43.95" y="2" width="1.2" height="2.500" fill="#f0f0f0"/><rect x="48.50" y="2" width="1.2" height="2.500" fill="#f0f0f0"/><rect x="53.05" y="2" width="1.2" height="2.500" fill="#f0f0f0"/><rect x="57.60" y="2" width="1.2" height="2.500" fill="#f0f0f0"/><rect x="62.15" y="2" width="1.2" height="2.500" fill="#f0f0f0"/><rect x="66.70" y="2" width="1.2" height="2.500" fill="#f0f0f0"/><rect x="71.25" y="2" width="1.2" height="2.500" fill="#f0f0f0"/><rect x="75.80" y="2" width="1.2" height="2.500" fill="#f0f0f0"/><rect x="80.35" y="2" width="1.2" height="2.500" fill="#f0f0f0"/><rect x="84.90" y="2" width="1.2" height="2.500" fill="#f0f0f0"/><rect x="89.45" y="2" width="1.2" height="2.500" fill="#f0f0f0"/><rect x="94.00" y="2" width="1.2" height="2.500" fill="#f0f0f0"/><rect x="59.2" y="15" width="37.8" height="2" fill="#fff"/><rect x="0" y="11.500" width="59.2" height="9.500" fill="#2bb5fc"/><rect x="58.7" y="8" width="1.8" height="18" fill="#3a3a3a"/></svg></div><div class="jbtn" style="left:237px"></div><div class="a" style="left:245px;top:16.500px;width:13px;height:2px;background:#fff"></div><div class="a" style="left:250.500px;top:10.500px;width:2px;height:14px;background:#fff"></div></div>
<div class="jrow" style="top:446px"><div class="t" style="left:5px;top:17px;font-size:13px;color:#fff">G1</div><div class="jval"></div><div class="tr" style="left:98.5px;top:17px;font-size:13.7px;color:#fff">413.333</div><div class="jbtn" style="left:105px"></div><div class="a" style="left:112px;top:18px;width:16px;height:2px;background:#fff"></div><div class="jsl"><svg style="left:0;top:0" width="97" height="30"><rect x="3.00" y="2" width="1.2" height="2.500" fill="#f0f0f0"/><rect x="7.55" y="2" width="1.2" height="2.500" fill="#f0f0f0"/><rect x="12.10" y="2" width="1.2" height="2.500" fill="#f0f0f0"/><rect x="16.65" y="2" width="1.2" height="2.500" fill="#f0f0f0"/><rect x="21.20" y="2" width="1.2" height="2.500" fill="#f0f0f0"/><rect x="25.75" y="2" width="1.2" height="2.500" fill="#f0f0f0"/><rect x="30.30" y="2" width="1.2" height="2.500" fill="#f0f0f0"/><rect x="34.85" y="2" width="1.2" height="2.500" fill="#f0f0f0"/><rect x="39.40" y="2" width="1.2" height="2.500" fill="#f0f0f0"/><rect x="43.95" y="2" width="1.2" height="2.500" fill="#f0f0f0"/><rect x="48.50" y="2" width="1.2" height="2.500" fill="#f0f0f0"/><rect x="53.05" y="2" width="1.2" height="2.500" fill="#f0f0f0"/><rect x="57.60" y="2" width="1.2" height="2.500" fill="#f0f0f0"/><rect x="62.15" y="2" width="1.2" height="2.500" fill="#f0f0f0"/><rect x="66.70" y="2" width="1.2" height="2.500" fill="#f0f0f0"/><rect x="71.25" y="2" width="1.2" height="2.500" fill="#f0f0f0"/><rect x="75.80" y="2" width="1.2" height="2.500" fill="#f0f0f0"/><rect x="80.35" y="2" width="1.2" height="2.500" fill="#f0f0f0"/><rect x="84.90" y="2" width="1.2" height="2.500" fill="#f0f0f0"/><rect x="89.45" y="2" width="1.2" height="2.500" fill="#f0f0f0"/><rect x="94.00" y="2" width="1.2" height="2.500" fill="#f0f0f0"/><rect x="73.2" y="15" width="23.8" height="2" fill="#fff"/><rect x="0" y="11.500" width="73.2" height="9.500" fill="#2bb5fc"/><rect x="72.7" y="8" width="1.8" height="18" fill="#3a3a3a"/></svg></div><div class="jbtn" style="left:237px"></div><div class="a" style="left:245px;top:16.500px;width:13px;height:2px;background:#fff"></div><div class="a" style="left:250.500px;top:10.500px;width:2px;height:14px;background:#fff"></div></div>
<div class="t " style="left:1624px;top:816.5px;font-size:13px;color:#fff">坐标信息</div>
<div class="a" style="left:1621px;top:831px;width:286px;height:165px;background:#1e1e1e;border:1px solid #4f76a8"></div>
<div class="a" style="left:1622px;top:832px;width:284px;height:25px;background:#3f3f42"></div>
<div class="tc " style="left:1661.5px;top:845px;font-size:13px;color:#fff;letter-spacing:1px">类型</div>
<div class="tc " style="left:1741.5px;top:845px;font-size:13px;color:#fff;letter-spacing:1px">位置</div>
<div class="tc " style="left:1821.5px;top:845px;font-size:13px;color:#fff;letter-spacing:1px">速度</div>
<div class="cell" style="left:1622px;top:858px;width:79px"></div><div class="cell" style="left:1702px;top:858px;width:79px"></div><div class="cell" style="left:1782px;top:858px;width:79px"></div><div class="cell" style="left:1862px;top:858px;width:44px;background:#39393b"></div>
<div class="t " style="left:1629px;top:869.5px;font-size:13px;color:#ececec"><span class="mono">X</span></div>
<div class="t " style="left:1709px;top:869.5px;font-size:13px;color:#ececec"><span class="mono">867.49</span></div>
<div class="t " style="left:1789px;top:869.5px;font-size:13px;color:#ececec"><span class="mono">0</span></div>
<div class="cell" style="left:1622px;top:881px;width:79px"></div><div class="cell" style="left:1702px;top:881px;width:79px"></div><div class="cell" style="left:1782px;top:881px;width:79px"></div><div class="cell" style="left:1862px;top:881px;width:44px;background:#39393b"></div>
<div class="t " style="left:1629px;top:892.5px;font-size:13px;color:#ececec"><span class="mono">Y</span></div>
<div class="t " style="left:1709px;top:892.5px;font-size:13px;color:#ececec"><span class="mono">-1113.62</span></div>
<div class="t " style="left:1789px;top:892.5px;font-size:13px;color:#ececec"><span class="mono">0</span></div>
<div class="cell" style="left:1622px;top:904px;width:79px"></div><div class="cell" style="left:1702px;top:904px;width:79px"></div><div class="cell" style="left:1782px;top:904px;width:79px"></div><div class="cell" style="left:1862px;top:904px;width:44px;background:#39393b"></div>
<div class="t " style="left:1629px;top:915.5px;font-size:13px;color:#ececec"><span class="mono">Z</span></div>
<div class="t " style="left:1709px;top:915.5px;font-size:13px;color:#ececec"><span class="mono">805.3</span></div>
<div class="t " style="left:1789px;top:915.5px;font-size:13px;color:#ececec"><span class="mono">0</span></div>
<div class="cell" style="left:1622px;top:927px;width:79px"></div><div class="cell" style="left:1702px;top:927px;width:79px"></div><div class="cell" style="left:1782px;top:927px;width:79px"></div><div class="cell" style="left:1862px;top:927px;width:44px;background:#39393b"></div>
<div class="t " style="left:1629px;top:938.5px;font-size:13px;color:#ececec"><span class="mono">RX(° )</span></div>
<div class="t " style="left:1709px;top:938.5px;font-size:13px;color:#ececec"><span class="mono">179</span></div>
<div class="t " style="left:1789px;top:938.5px;font-size:13px;color:#ececec"><span class="mono">0</span></div>
<div class="cell" style="left:1622px;top:950px;width:79px"></div><div class="cell" style="left:1702px;top:950px;width:79px"></div><div class="cell" style="left:1782px;top:950px;width:79px"></div><div class="cell" style="left:1862px;top:950px;width:44px;background:#39393b"></div>
<div class="t " style="left:1629px;top:961.5px;font-size:13px;color:#ececec"><span class="mono">RY(° )</span></div>
<div class="t " style="left:1709px;top:961.5px;font-size:13px;color:#ececec"><span class="mono">44.991</span></div>
<div class="t " style="left:1789px;top:961.5px;font-size:13px;color:#ececec"><span class="mono">0</span></div>
<div class="cell" style="left:1622px;top:973px;width:79px"></div><div class="cell" style="left:1702px;top:973px;width:79px"></div><div class="cell" style="left:1782px;top:973px;width:79px"></div><div class="cell" style="left:1862px;top:973px;width:44px;background:#39393b"></div>
<div class="t " style="left:1629px;top:984.5px;font-size:13px;color:#ececec"><span class="mono">RZ(° )</span></div>
<div class="t " style="left:1709px;top:984.5px;font-size:13px;color:#ececec"><span class="mono">1.414</span></div>
<div class="t " style="left:1789px;top:984.5px;font-size:13px;color:#ececec"><span class="mono">0</span></div>
<div class="a" style="left:0;top:1009px;width:1920px;height:2px;background:#4b79c4"></div>
<svg id="scene" style="left:313px;top:145px;overflow:hidden" width="1294" height="652" viewBox="313 145 1294 652">
<defs><linearGradient id="bg" gradientUnits="userSpaceOnUse" x1="0" y1="145" x2="0" y2="797"><stop offset="0" stop-color="#bbbbbb"/><stop offset=".65" stop-color="#7b7b7b"/><stop offset="1" stop-color="#555"/></linearGradient><linearGradient id="dk" gradientUnits="userSpaceOnUse" x1="0" y1="731" x2="0" y2="797"><stop offset="0" stop-color="#525252"/><stop offset="1" stop-color="#333"/></linearGradient><linearGradient id="cyl" gradientUnits="userSpaceOnUse" x1="765" y1="0" x2="884" y2="0"><stop offset="0" stop-color="#8e8e8e"/><stop offset=".2" stop-color="#7b7b7b"/><stop offset=".55" stop-color="#656565"/><stop offset=".72" stop-color="#515151"/><stop offset=".77" stop-color="#474747"/><stop offset=".86" stop-color="#595959"/><stop offset=".9" stop-color="#707070"/><stop offset="1" stop-color="#777"/></linearGradient><linearGradient id="cone" gradientUnits="userSpaceOnUse" x1="765" y1="0" x2="884" y2="0"><stop offset="0" stop-color="#b4b4b4"/><stop offset=".22" stop-color="#d6d6d6"/><stop offset=".5" stop-color="#e4e4e4"/><stop offset=".8" stop-color="#dedede"/><stop offset="1" stop-color="#d2d2d2"/></linearGradient><linearGradient id="rail" gradientUnits="userSpaceOnUse" x1="340" y1="0" x2="1100" y2="0"><stop offset="0" stop-color="#8e8e8e"/><stop offset=".4" stop-color="#767676"/><stop offset="1" stop-color="#7b7b7b"/></linearGradient><linearGradient id="flr" gradientUnits="userSpaceOnUse" x1="313" y1="0" x2="1607" y2="0"><stop offset="0" stop-color="#efefef"/><stop offset="1" stop-color="#ebebeb"/></linearGradient><linearGradient id="rail2" gradientUnits="userSpaceOnUse" x1="437" y1="0" x2="600" y2="0"><stop offset="0" stop-color="#858585"/><stop offset="1" stop-color="#777"/></linearGradient></defs>
<rect x="313" y="145" width="1294" height="652" fill="url(#bg)"/>
<polygon points="313.0,316.0 1607.0,718.8 1607.0,797.0 532.5,797.0 313.0,731.2" fill="url(#flr)"/>
<polygon points="313.0,731.2 532.5,797.0 313.0,797.0" fill="url(#dk)"/>
<polyline points="313.0,731.2 534.0,797.3" fill="none" stroke="#0a0a0a" stroke-width="1.6"/>
<polyline points="313.0,343.0 1607.0,729.3" fill="none" stroke="#1c1c1c" stroke-width="0.9"/>
<polyline points="313.0,474.2 1607.0,860.5" fill="none" stroke="#1c1c1c" stroke-width="0.9"/>
<polyline points="313.0,605.5 1607.0,991.8" fill="none" stroke="#1c1c1c" stroke-width="0.9"/>
<polyline points="376.0,335.6 313.0,389.8" fill="none" stroke="#1c1c1c" stroke-width="0.9"/>
<polyline points="548.8,389.4 313.0,592.2" fill="none" stroke="#1c1c1c" stroke-width="0.9"/>
<polyline points="721.6,443.2 367.8,747.5" fill="none" stroke="#1c1c1c" stroke-width="0.9"/>
<polyline points="894.4,497.0 545.6,797.0" fill="none" stroke="#1c1c1c" stroke-width="0.9"/>
<polyline points="1067.2,550.8 780.9,797.0" fill="none" stroke="#1c1c1c" stroke-width="0.9"/>
<polyline points="1240.0,604.6 1016.3,797.0" fill="none" stroke="#1c1c1c" stroke-width="0.9"/>
<polyline points="1412.8,658.4 1251.6,797.0" fill="none" stroke="#1c1c1c" stroke-width="0.9"/>
<polyline points="1585.6,712.2 1486.9,797.0" fill="none" stroke="#1c1c1c" stroke-width="0.9"/>
<polyline points="1758.4,766.0 1722.3,797.0" fill="none" stroke="#1c1c1c" stroke-width="0.9"/>
<polygon points="313.0,162.5 1607.0,565.3 1607.0,631.8 313.0,229.0" fill="#cbced1"/>
<polygon points="1100.0,405.0 1141.1,374.8 1150.0,372.1 1248.8,402.3 1203.4,437.0 1212.0,443.0" fill="#cbced1"/>
<polyline points="1144.6,373.5 1150.0,372.1 1248.8,402.3" fill="none" stroke="#15161a" stroke-width="1"/>
<polygon points="313.0,229.0 1607.0,631.8 1607.0,718.8 313.0,316.0" fill="#636466"/>
<polyline points="313.0,162.5 1607.0,565.3" fill="none" stroke="#15161a" stroke-width="1.1"/>
<polyline points="313.0,229.0 1607.0,631.8" fill="none" stroke="#15161a" stroke-width="1.1"/>
<polyline points="313.0,316.0 1607.0,718.8" fill="none" stroke="#15161a" stroke-width="1.1"/>
<polyline points="909.5,414.7 914.5,502.7" fill="none" stroke="#15161a" stroke-width="1"/>
<polyline points="909.5,414.7 967.0,367.2" fill="none" stroke="#15161a" stroke-width="1"/>
<polyline points="1237.5,516.8 1242.5,604.8" fill="none" stroke="#15161a" stroke-width="1"/>
<polyline points="1237.5,516.8 1295.0,469.3" fill="none" stroke="#15161a" stroke-width="1"/>
<polyline points="854.6,441.6 864.9,444.4" fill="none" stroke="#111" stroke-width="2.6"/>
<polyline points="855.2,441.7 864.3,444.2" fill="none" stroke="#c4c4c4" stroke-width="1.2"/>
<path d="M861 446.500Q858 450.500 863 451.600Q869 451.800 871.500 447.500" fill="none" stroke="#111" stroke-width="1.700" stroke-dasharray="1.300 .7"/>
<polyline points="872.4,446.8 881.6,449.5" fill="none" stroke="#111" stroke-width="2.2"/>
<polyline points="873.0,446.9 880.6,449.1" fill="none" stroke="#c4c4c4" stroke-width="1"/>
<polygon points="1072.6,386.3 1142.0,332.0 1144.6,373.5 1111.7,397.0 1090.0,400.0" fill="#4f5053" stroke="#15161a" stroke-width="1.3" stroke-linejoin="round"/>
<polygon points="1065.4,383.7 1134.9,330.3 1142.0,332.0 1072.6,386.3" fill="#c3c7ca" stroke="#15161a" stroke-width="0.8" stroke-linejoin="round"/>
<polygon points="1210.5,441.5 1290.6,378.3 1295.0,457.5 1286.2,464.9" fill="#4f5053" stroke="#15161a" stroke-width="1.3" stroke-linejoin="round"/>
<polygon points="1203.4,437.2 1282.6,376.5 1290.6,378.3 1210.5,441.5" fill="#c3c7ca" stroke="#15161a" stroke-width="0.8" stroke-linejoin="round"/>
<polygon points="1034.3,376.5 1134.0,406.8 1136.6,450.4 1037.0,421.0" fill="#636466" stroke="#15161a" stroke-width="1.4" stroke-linejoin="round"/>
<polyline points="1035.2,377.8 1133.6,407.8" fill="none" stroke="#9a9da0" stroke-width="1"/>
<polygon points="880.0,653.8 1052.5,706.2 1164.2,608.0 991.8,555.5" fill="#d5fbff"/>
<polygon points="880.0,653.8 1052.5,706.2 1052.5,721.8 880.0,669.8" fill="#6b87bd"/>
<polygon points="1052.5,706.2 1164.2,608.0 1165.0,624.0 1052.5,721.8" fill="#596f9f"/>
<polygon points="927.5,549.3 995.0,492.7 1009.8,488.3 1114.5,520.2 1065.0,565.5 1066.2,595.5 1060.0,599.2 929.2,556.8" fill="#cbced1"/>
<polygon points="929.4,554.6 1060.0,597.0 1066.2,593.3 1066.2,595.8 1060.0,599.6 929.6,557.3" fill="#8f9295" stroke="#1d1e21" stroke-width="1" stroke-linejoin="round"/>
<polygon points="921.5,520.9 1002.4,444.5 1004.6,483.1 1003.0,489.5 995.0,492.7 927.5,549.3 929.2,556.8 955.0,568.0 925.0,590.5" fill="#4f5053" stroke="#15161a" stroke-width="1.3" stroke-linejoin="round"/>
<polygon points="915.6,518.7 995.0,442.3 1002.4,444.5 921.5,520.9" fill="#bfc3c6" stroke="#15161a" stroke-width="0.8" stroke-linejoin="round"/>
<polygon points="915.6,518.7 921.5,520.9 925.0,590.5 919.3,588.0" fill="#5f6063" stroke="#15161a" stroke-width="0.8" stroke-linejoin="round"/>
<polyline points="1009.8,488.3 1112.2,519.5" fill="none" stroke="#e23a3a" stroke-width="0.9" stroke-dasharray="2.500 .8"/>
<polyline points="995.0,492.7 940.0,538.9" fill="none" stroke="#e23a3a" stroke-width="0.9" stroke-dasharray="2.500 .8"/>
<polyline points="940.0,538.9 927.5,549.3" fill="none" stroke="#20e020" stroke-width="1.1"/>
<circle cx="1060" cy="504" r=".9" fill="#f03030"/><circle cx="1034" cy="496.200" r=".9" fill="#f03030"/>
<polygon points="1071.2,568.0 1151.3,491.0 1156.2,578.0 1075.0,636.8" fill="#4f5053" stroke="#15161a" stroke-width="1.3" stroke-linejoin="round"/>
<polygon points="1065.0,565.5 1145.0,489.2 1151.3,491.0 1071.2,568.0" fill="#bfc3c6" stroke="#15161a" stroke-width="0.8" stroke-linejoin="round"/>
<polygon points="1065.0,565.5 1071.2,568.0 1075.0,636.8 1068.8,634.2" fill="#5f6063" stroke="#15161a" stroke-width="0.8" stroke-linejoin="round"/>
<polyline points="1151.3,491.0 1156.2,578.0" fill="none" stroke="#15161a" stroke-width="1"/>
<polyline points="984.7,452.2 991.3,454.2" fill="none" stroke="#15161a" stroke-width="0.9"/>
<polyline points="942.6,492.7 949.2,494.7" fill="none" stroke="#15161a" stroke-width="0.9"/>
<polyline points="1134.6,499.1 1141.2,501.1" fill="none" stroke="#15161a" stroke-width="0.9"/>
<polyline points="1092.2,539.6 1098.8,541.6" fill="none" stroke="#15161a" stroke-width="0.9"/>
<polygon points="444.0,570.2 780.0,669.3 780.0,694.0 462.2,598.0 437.8,602.2 419.3,603.5" fill="#e9e9e9"/>
<polygon points="444.0,570.2 600.0,616.2 600.0,623.8 443.3,577.6" fill="#8b8b8b"/>
<polyline points="443.7,574.5 600.0,620.6" fill="none" stroke="#e2e2e2" stroke-width="1.1"/>
<polygon points="660.0,633.9 713.2,649.6 706.5,655.0 660.0,641.3" fill="#8b8b8b"/>
<polyline points="660.0,638.1 709.0,652.6" fill="none" stroke="#dcdcdc" stroke-width="1"/>
<polygon points="437.8,602.2 462.2,598.0 600.0,639.6 600.0,670.6 464.7,630.0 437.8,622.7" fill="url(#rail2)"/>
<polygon points="412.6,605.9 419.3,603.5 437.8,602.2 437.8,622.7 432.8,624.0 401.6,656.0 390.7,645.9 415.9,621.5 412.9,620.7" fill="#6d6d6d"/>
<polygon points="412.6,605.9 416.5,604.6 417.0,620.5 412.9,620.7" fill="#9a9a9a"/>
<polygon points="412.6,605.9 419.3,603.5 462.2,598.0 437.8,602.2" fill="#8e8e8e"/>
<circle cx="433" cy="619.5" r="1" fill="#ddd"/><circle cx="412.500" cy="637.300" r="1" fill="#ddd"/>
<polyline points="421.8,638.3 464.7,631.6" fill="none" stroke="#8a8a8a" stroke-width="1.4"/>
<polygon points="384.0,632.0 386.5,636.0 382.0,636.5" fill="#8a8a8a"/>
<polygon points="880.0,723.0 1126.0,797.0 1023.6,797.0 886.3,755.4" fill="#797979"/>
<polygon points="888.7,706.2 1202.5,796.8 1192.0,796.8 888.2,709.2" fill="#8a8a8a"/>
<polygon points="887.5,710.6 1185.0,796.8 1180.0,796.8 887.3,712.1" fill="#8a8a8a"/>
<polygon points="884.0,712.5 1176.0,797.0 1128.0,797.0 880.0,722.5" fill="#e9e9e9"/>
<polygon points="805.2,780.1 869.0,731.8 885.3,736.8 831.4,784.6" fill="#ececec"/>
<polygon points="831.4,784.6 885.3,736.8 885.8,753.9 848.2,789.5" fill="#757575"/>
<polygon points="618.5,734.3 732.8,636.7 904.4,688.9 793.4,786.4" fill="#e7e7e7"/>
<polygon points="793.4,786.4 904.4,688.9 905.0,693.5 793.4,791.6" fill="#787878"/>
<polyline points="732.8,636.7 790.0,654.0" fill="none" stroke="#c4c4c4" stroke-width="0.6" stroke-dasharray="2 1.500"/>
<polyline points="726.0,770.0 707.0,764.2 735.5,740.5" fill="none" stroke="#bdbdbd" stroke-width="0.6" stroke-dasharray="2 1.500"/>
<polygon points="357.1,646.8 624.4,726.7 618.5,734.3 793.4,786.4 805.2,780.1 848.2,789.5 860.0,797.0 770.0,797.0 340.3,668.3 346.7,654.9" fill="#e9e9e9"/>
<polygon points="357.1,646.8 624.4,726.7 622.5,729.4 357.1,649.8" fill="#8a8a8a"/>
<polygon points="346.7,654.9 808.0,793.3 830.0,797.0 812.0,797.0 346.7,662.1" fill="#8a8a8a"/>
<polyline points="346.7,657.5 815.0,798.0" fill="none" stroke="#d9d9d9" stroke-width="0.8" stroke-dasharray="3 1"/>
<polygon points="340.3,668.3 770.0,797.2 770.0,800.0 667.0,800.0 342.0,702.3" fill="url(#rail)"/>
<polyline points="340.3,668.6 770.0,797.5" fill="none" stroke="#b9b9b9" stroke-width="0.8"/>
<polygon points="344.5,712.4 370.5,721.6 379.0,713.2 352.0,704.8" fill="#e2e2e2" stroke="#8c8c8c" stroke-width="0.6" stroke-linejoin="round"/>
<polygon points="344.5,712.4 347.8,693.0 351.2,691.9 350.4,709.0" fill="#b2b2b2" stroke="#8c8c8c" stroke-width="0.5" stroke-linejoin="round"/>
<polygon points="370.5,721.6 372.2,700.6 375.9,699.0 376.4,714.0" fill="#b2b2b2" stroke="#8c8c8c" stroke-width="0.5" stroke-linejoin="round"/>
<circle cx="353.0" cy="710.9" r=".8" fill="#666"/><circle cx="366.5" cy="715.6" r=".8" fill="#666"/>
<polygon points="527.8,767.0 553.8,776.2 562.3,767.8 535.3,759.4" fill="#e2e2e2" stroke="#8c8c8c" stroke-width="0.6" stroke-linejoin="round"/>
<polygon points="527.8,767.0 531.1,747.6 534.5,746.5 533.7,763.6" fill="#b2b2b2" stroke="#8c8c8c" stroke-width="0.5" stroke-linejoin="round"/>
<polygon points="553.8,776.2 555.5,755.2 559.2,753.6 559.7,768.6" fill="#b2b2b2" stroke="#8c8c8c" stroke-width="0.5" stroke-linejoin="round"/>
<circle cx="536.3" cy="765.5" r=".8" fill="#666"/><circle cx="549.8" cy="770.2" r=".8" fill="#666"/>
<path d="M764 546L772.7 714A55.3 29 0 0 0 883.3 712L874 542Z" fill="url(#cyl)"/>
<path d="M764 546L793.3 517A23.9 12.6 0 0 1 841.2 514.600L874 541.500A55 29.500 0 0 1 764 546Z" fill="url(#cone)"/>
<path d="M841.2 526L874 541.500A55 29.500 0 0 1 864.500 560Z" fill="#c6c6c6" opacity=".75"/>
<ellipse cx="817.2" cy="519.5" rx="23.9" ry="12.6" fill="#ebebeb"/>
<polygon points="726.4,687.1 749.6,667.9 790.7,680.7 768.9,700.0" fill="#fdfdfd"/>
<polygon points="726.4,687.1 768.9,700.0 772.7,769.4 730.3,756.6" fill="#8d8d8d"/>
<polygon points="768.9,700.0 790.7,680.7 794.6,748.8 772.7,769.4" fill="#7b7b7b"/>
<defs><linearGradient id="rb1" x1="0" y1="0" x2="1" y2="0"><stop offset="0" stop-color="#e9e9e9"/><stop offset="1" stop-color="#c9c9c9"/></linearGradient><linearGradient id="fa" x1="0" y1="0" x2="0" y2="1"><stop offset="0" stop-color="#ffffff"/><stop offset=".5" stop-color="#f4f4f4"/><stop offset="1" stop-color="#d0d0d0"/></linearGradient><radialGradient id="hd" cx=".35" cy=".3" r=".8"><stop offset="0" stop-color="#ffffff"/><stop offset=".6" stop-color="#f2f2f2"/><stop offset="1" stop-color="#cfcfcf"/></radialGradient></defs>
<polygon points="595.3,710.0 616.1,715.1 616.1,719.3 596.3,714.1" fill="#8a8a8a"/>
<polygon points="574.5,677.8 579.7,673.6 643.0,679.9 709.5,669.5 708.4,698.5 673.1,720.3 642.0,714.1 639.9,719.7 616.1,720.5 615.0,713.1 595.3,706.8 580.8,696.5 575.6,686.1" fill="#cdcdcd"/>
<polygon points="574.5,677.8 582.8,666.4 597.4,658.1 659.6,656.0 676.3,652.9 709.9,665.3 673.1,692.3 642.0,686.1 622.3,689.2 597.4,686.1 580.8,680.9" fill="#f4f4f4"/>
<polygon points="642.0,686.1 673.1,692.3 673.1,720.3 642.0,714.1" fill="#dcdcdc"/>
<polygon points="673.1,692.3 709.9,665.3 708.4,698.5 673.1,720.3" fill="#a6a6a6"/>
<polygon points="675.2,702.7 684.6,697.5 685.0,705.8 675.6,711.4" fill="#f4f4f4" stroke="#a8a8a8" stroke-width="0.5" stroke-linejoin="round"/>
<polygon points="686.6,696.5 692.9,692.7 693.3,701.0 687.1,704.8" fill="#f4f4f4" stroke="#a8a8a8" stroke-width="0.5" stroke-linejoin="round"/>
<polygon points="694.9,690.6 700.1,687.3 700.5,695.6 695.4,698.9" fill="#f4f4f4" stroke="#a8a8a8" stroke-width="0.5" stroke-linejoin="round"/>
<polygon points="619.2,689.2 631.6,689.2 632.7,706.8 639.9,714.1 639.9,719.7 616.1,720.5 615.6,713.1 620.6,706.8" fill="#d9d9d9" stroke="#b0b0b0" stroke-width="0.5" stroke-linejoin="round"/>
<polygon points="622.3,690.2 628.5,690.2 628.9,705.8 622.3,705.8" fill="#bcbcbc"/>
<circle cx="624.8" cy="711.0" r="1.2" fill="#777"/>
<polyline points="584.9,669.9 598.4,674.0" fill="none" stroke="#b0b0b0" stroke-width="2.2" stroke-linejoin="round"/>
<polyline points="589.1,678.2 604.6,679.9" fill="none" stroke="#b0b0b0" stroke-width="2.2" stroke-linejoin="round"/>
<polyline points="599.4,684.0 609.8,677.8" fill="none" stroke="#b0b0b0" stroke-width="2.2" stroke-linejoin="round"/>
<polyline points="612.9,687.1 617.1,678.8" fill="none" stroke="#b0b0b0" stroke-width="2.2" stroke-linejoin="round"/>
<polyline points="630.6,686.1 628.5,678.8" fill="none" stroke="#b0b0b0" stroke-width="2.2" stroke-linejoin="round"/>
<polyline points="649.3,673.6 659.6,668.4" fill="none" stroke="#b0b0b0" stroke-width="2.2" stroke-linejoin="round"/>
<polyline points="652.4,679.9 668.0,675.7" fill="none" stroke="#b0b0b0" stroke-width="2.2" stroke-linejoin="round"/>
<ellipse cx="620.2" cy="665.3" rx="36.3" ry="10.0" fill="#bdbdbd" transform="rotate(4 620.2 665.3)"/>
<polygon points="597.7,655.4 607.2,649.4 627.3,646.8 655.8,642.5 658.2,647.1 651.1,652.4 634.5,657.7 615.5,659.5 602.4,658.9" fill="#f7f7f7"/>
<polygon points="617.8,616.2 625.0,609.1 634.5,611.5 643.9,628.1 655.8,639.9 655.8,642.5 627.3,647.1 617.8,644.7" fill="#8f8f8f"/>
<polygon points="616.7,628.1 625.0,623.3 632.1,626.9 623.8,633.4" fill="#f4f4f4" stroke="#bdbdbd" stroke-width="0.4" stroke-linejoin="round"/>
<polygon points="616.7,628.1 623.8,633.4 623.8,636.4 616.9,631.6" fill="#c9c9c9"/>
<polygon points="609.5,599.0 620.2,593.7 623.8,597.2 617.8,616.2 617.8,644.7 613.1,649.4 608.9,639.9" fill="#f1f1f1"/>
<polygon points="609.5,599.0 613.7,597.2 614.9,647.1 613.1,649.4 608.9,639.9" fill="#dcdcdc"/>
<polygon points="578.7,597.2 585.8,604.3 587.0,644.1 579.9,639.3" fill="#f3f3f3"/>
<polygon points="585.8,604.3 608.3,598.4 609.8,639.3 587.0,644.1" fill="#c0c0c0"/>
<polygon points="585.8,604.3 590.5,603.1 591.7,643.0 587.0,644.1" fill="#dedede"/>
<polygon points="578.7,597.2 582.2,591.9 601.2,590.7 608.3,598.4 585.8,604.3" fill="#d4d4d4"/>
<polygon points="581.1,590.7 588.2,589.9 588.4,591.5 581.3,592.5" fill="#1a1a1a"/>
<polygon points="573.9,654.2 579.9,642.3 587.0,644.1 585.8,655.4 578.7,662.5 574.5,658.9" fill="#ececec" stroke="#c6c6c6" stroke-width="0.4" stroke-linejoin="round"/>
<polygon points="613.1,561.0 619.3,550.9 638.0,546.4 651.1,562.8 632.1,572.5 620.2,575.3 614.9,572.3" fill="#f7f7f7" stroke="#cdcdcd" stroke-width="0.5" stroke-linejoin="round"/>
<polygon points="614.9,572.3 620.2,575.3 632.1,572.5 645.1,567.5 639.2,577.0 623.8,594.8 619.0,597.2 617.8,584.2" fill="#e3e3e3"/>
<polygon points="622.6,579.4 640.4,570.5 638.0,575.9 623.8,592.5" fill="#a9a9a9"/>
<polygon points="619.3,550.9 638.0,546.4 643.9,553.9 625.0,559.2" fill="#ffffff"/>
<path d="M614.9 569.3C604.8 572.3 603.6 583.0 609.5 597.2" fill="none" stroke="#161616" stroke-width="2"/>
<ellipse cx="639.2" cy="606.7" rx="16.500" ry="27" fill="#dadada" stroke="#b4b4b4" stroke-width=".6" transform="rotate(-33 639.2 606.7)"/>
<ellipse cx="639.2" cy="606.7" rx="14" ry="24.500" fill="none" stroke="#8a8a8a" stroke-width="1.300" stroke-dasharray="1.200 4.200" transform="rotate(-33 639.2 606.7)"/>
<ellipse cx="645.1" cy="609.7" rx="12" ry="22" fill="#f4f4f4" stroke="#bbb" stroke-width=".6" transform="rotate(-33 645.1 609.7)"/>
<ellipse cx="651.1" cy="611.5" rx="11" ry="21" fill="#dcdcdc" stroke="#b0b0b0" stroke-width=".6" transform="rotate(-33 651.1 611.5)"/>
<ellipse cx="659.4" cy="616.2" rx="12" ry="19" fill="#cfcfcf" stroke="#efefef" stroke-width="1.200" transform="rotate(-33 659.4 616.2)"/>
<ellipse cx="659.4" cy="616.2" rx="10" ry="16.500" fill="none" stroke="#8a8a8a" stroke-width="1.200" stroke-dasharray="1.200 3" transform="rotate(-33 659.4 616.2)"/>
<path d="M819.2 403.7C838.5 407.6 835.9 425.6 805.0 443.6L787.0 451.3" fill="none" stroke="#2b2b2b" stroke-width="3.400"/>
<path d="M819.2 403.7C838.5 407.6 835.9 425.6 805.0 443.6L787.0 451.3" fill="none" stroke="#8a8a8a" stroke-width=".7"/>
<polygon points="724.6,366.4 727.9,353.6 736.9,338.2 745.2,329.4 757.4,327.9 802.5,330.9 810.4,336.9 817.9,345.2 825.9,353.6 843.6,357.4 849.5,363.9 850.3,374.2 846.4,387.0 838.7,392.2 829.7,393.7 828.4,398.0 817.9,405.3 805.0,407.9 797.3,405.0 787.0,397.3 753.6,394.7 750.4,428.2 740.7,415.3 727.9,392.2 724.3,376.7" fill="#fbfbfb"/>
<polygon points="724.6,366.4 743.6,375.5 744.8,392.2 753.6,397.3 750.4,428.2 740.7,415.3 727.9,392.2 724.3,376.7" fill="#d2d2d2"/>
<polygon points="724.6,366.4 727.9,353.6 744.6,371.6 743.6,375.5" fill="#ececec"/>
<polygon points="743.6,375.5 757.4,369.0 754.9,387.0 744.8,392.2" fill="#f2f2f2" stroke="#cfcfcf" stroke-width="0.5" stroke-linejoin="round"/>
<polygon points="744.8,392.2 753.6,390.9 753.6,397.3 745.9,397.3" fill="#c4c4c4"/>
<polyline points="752.3,336.2 770.3,338.8" fill="none" stroke="#d9d9d9" stroke-width="1.2" stroke-linejoin="round"/>
<polyline points="756.2,331.1 775.5,333.0" fill="none" stroke="#dcdcdc" stroke-width="1" stroke-linejoin="round"/>
<polygon points="760.0,325.3 764.5,325.0 766.4,327.6 760.3,327.9" fill="#222"/>
<polygon points="753.6,392.2 758.7,370.6 770.3,359.0 809.5,359.5 804.0,381.9 793.7,392.2 776.7,393.7 760.0,397.3" fill="#8b8b8b"/>
<polygon points="809.5,359.5 825.9,353.6 827.2,376.7 824.3,392.2 817.9,405.3 805.0,407.9 799.9,399.9 793.7,392.2 804.0,381.9" fill="#ededed"/>
<polygon points="793.7,392.2 799.9,387.0 810.2,390.9 803.7,393.5 805.0,407.9 799.9,405.0" fill="#fafafa" stroke="#b9b9b9" stroke-width="0.5" stroke-linejoin="round"/>
<polygon points="816.6,376.7 827.2,375.5 824.3,392.2 817.9,405.0 814.0,397.3" fill="#cfcfcf"/>
<polygon points="825.9,353.6 843.6,357.4 849.5,363.9 850.3,374.2 846.4,387.0 838.7,392.2 829.7,393.7 827.2,376.7" fill="#f1f1f1"/>
<polygon points="828.2,381.9 848.8,379.3 846.4,387.0 838.7,392.2 829.7,393.7" fill="#cdcdcd"/>
<polyline points="843.6,357.7 847.5,366.4 848.0,375.5 844.9,387.0" fill="none" stroke="#d6d6d6" stroke-width="1" stroke-linejoin="round"/>
<polygon points="824.3,372.9 830.8,371.6 831.4,378.0 825.0,379.1" fill="#9a9a9a"/>
<polygon points="824.3,375.5 830.8,374.4 831.4,378.0 825.0,379.1" fill="#f6f6f6"/>
<text x="741.8" y="356.4" transform="rotate(40 741.8 356.4)" font-family="Liberation Sans" font-weight="bold" font-size="9" fill="#f00d14" stroke="#f00d14" stroke-width=".5" text-anchor="middle" dominant-baseline="central" letter-spacing="-.9">ABB</text>
<ellipse cx="775.5" cy="416.6" rx="27.500" ry="25" fill="#d9d9d9" transform="rotate(-30 775.5 416.6)"/>
<ellipse cx="775.5" cy="416.6" rx="24" ry="21.500" fill="none" stroke="#6f6f6f" stroke-width="3.400" stroke-dasharray="2.200 1.600" transform="rotate(-30 775.5 416.6)"/>
<ellipse cx="777.0" cy="418.6" rx="20" ry="18" fill="#e9e9e9" stroke="#bdbdbd" stroke-width=".8" transform="rotate(-30 775.5 416.6)"/>
<ellipse cx="779.5" cy="421.6" rx="15" ry="13" fill="#8f8f8f" transform="rotate(-30 775.5 416.6)"/>
<defs><linearGradient id="armg" gradientUnits="userSpaceOnUse" x1="702.1" y1="520" x2="716.5" y2="528.8"><stop offset="0" stop-color="#ffffff"/><stop offset=".38" stop-color="#fbfbfb"/><stop offset=".5" stop-color="#e9e9e9"/><stop offset="1" stop-color="#c2c2c2"/></linearGradient><linearGradient id="armd" gradientUnits="userSpaceOnUse" x1="790" y1="440" x2="690" y2="610"><stop offset="0" stop-color="#969696"/><stop offset="1" stop-color="#878787"/></linearGradient></defs>
<polygon points="762.7,420.4 768.0,414.0 777.0,410.5 789.0,410.5 798.0,415.0 803.0,423.0 803.0,431.0 798.4,437.0 789.8,451.5 717.2,576.1 703.0,601.0 694.0,618.0 684.0,628.0 672.0,632.0 660.0,630.0 652.0,622.0 649.5,611.0 652.8,601.0 668.0,576.1 743.8,451.5" fill="url(#armg)"/>
<polygon points="774.4,432.8 780.0,426.0 792.0,424.0 799.5,429.0 798.4,437.0 789.8,451.5 717.2,576.1 703.0,601.0 694.0,618.0 684.0,628.0 672.0,632.0 660.0,630.0 652.0,622.0 649.5,612.0 652.0,604.5 664.0,611.0 686.1,576.1 762.9,451.5" fill="url(#armd)"/>
<path d="M773 436Q781 446 793 437" fill="none" stroke="#c9c9c9" stroke-width="2.200"/>
<path d="M673 598Q677 604 684 606" fill="none" stroke="#d5d5d5" stroke-width="1.800"/>
<polyline points="796.1,451.5 779.5,456.7 771.2,464.0 756.6,486.8 746.3,503.4 733.8,526.3 724.5,542.9 713.0,551.2 702.7,567.8 692.3,590.6 686.1,605.1 681.9,617.6" fill="none" stroke="#333" stroke-width="1.5" stroke-linejoin="round"/>
<polyline points="800.2,453.6 782.6,459.4 773.2,467.1 759.7,488.9 749.4,505.5 736.9,528.3 727.6,544.9 717.2,555.3 706.8,571.9 696.4,592.7 690.2,607.2" fill="none" stroke="#4a4a4a" stroke-width="1.1" stroke-linejoin="round"/>
<polyline points="717.2,542.9 711.0,549.1 700.6,567.8 694.4,580.2" fill="none" stroke="#555" stroke-width="0.6" stroke-linejoin="round"/>
<circle cx="751.4" cy="472.3" r="1.700" fill="#e6e6e6" stroke="#7a7a7a" stroke-width=".4"/>
<circle cx="769.5" cy="479.5" r="1.700" fill="#e6e6e6" stroke="#7a7a7a" stroke-width=".4"/>
<circle cx="718.9" cy="526.7" r="1.700" fill="#e6e6e6" stroke="#7a7a7a" stroke-width=".4"/>
<circle cx="736.9" cy="533.5" r="1.700" fill="#e6e6e6" stroke="#7a7a7a" stroke-width=".4"/>
<circle cx="687.7" cy="577.1" r="1.700" fill="#e6e6e6" stroke="#7a7a7a" stroke-width=".4"/>
<circle cx="705.2" cy="584.0" r="1.700" fill="#e6e6e6" stroke="#7a7a7a" stroke-width=".4"/>
<circle cx="688.1" cy="586.0" r="1.700" fill="#e6e6e6" stroke="#7a7a7a" stroke-width=".4"/>
<circle cx="770.8" cy="449.4" r="1.700" fill="#e6e6e6" stroke="#7a7a7a" stroke-width=".4"/>
<polygon points="684.4,590.2 697.5,593.7 696.8,596.8 683.6,593.5" fill="#e2e2e2" stroke="#8a8a8a" stroke-width="0.4" stroke-linejoin="round"/>
<path d="M678.7 621.0Q680.1 637.3 663.8 649.2T647.5 661.1" fill="none" stroke="#121212" stroke-width="5"/>
<path d="M585.9 658.7Q609.8 673.6 647.2 663.2" fill="none" stroke="#1c1c1c" stroke-width="6.500"/>
<path d="M587.0 661.2Q610.9 676.1 646.2 665.7" fill="none" stroke="#555" stroke-width="1"/>
<path d="M586.6 657.8Q609.8 672.4 646.8 662.4" fill="none" stroke="#6a6a6a" stroke-width=".7"/>
<polygon points="851.3,363.0 965.2,365.5 975.0,371.4 977.7,378.5 975.0,388.3 860.2,385.1 851.3,381.2" fill="url(#fa)"/>
<polygon points="861.1,375.1 972.3,377.3 975.0,383.3 974.1,388.3 860.2,385.1" fill="#9c9c9c"/>
<polygon points="861.1,375.1 972.3,377.3 972.7,378.7 861.1,376.6" fill="#b8b8b8"/>
<polygon points="965.2,363.8 972.3,360.2 991.9,358.4 1004.4,357.7 1014.2,363.4 1020.8,376.7 1019.0,388.3 1010.1,393.7 991.9,392.2 977.7,391.0 972.3,384.8 975.0,371.4" fill="#f2f2f2"/>
<polygon points="977.7,378.5 1002.6,381.2 1000.8,391.9 977.7,391.0 972.3,384.8" fill="#cfcfcf"/>
<polyline points="967.0,367.0 977.7,363.4 1002.6,361.6" fill="none" stroke="#d0d0d0" stroke-width="1" stroke-linejoin="round"/>
<circle cx="1011.9" cy="383.3" r="8.400" fill="#d9d9d9"/><circle cx="1012.7" cy="384.1" r="6" fill="#aeaeae"/>
<polyline points="984.8,383.3 1002.6,383.9" fill="none" stroke="#fafafa" stroke-width="1.4" stroke-linejoin="round"/>
<polygon points="1000.8,395.4 1010.6,395.4 1010.6,406.0 1008.5,408.5 1003.5,408.5 1001.5,406.0" fill="#161616"/>
<polygon points="1004.8,408.5 1007.8,408.5 1011.3,486.0 1008.4,487.0" fill="#4c4c4c"/>
<polyline points="997.5,491.8 1008.8,486.8" fill="none" stroke="#7d7d7d" stroke-width="3.2" stroke-linecap="round"/>
<circle cx="1009.8" cy="487" r="1.3" fill="#1fe01f"/><circle cx="994.500" cy="493" r="1.1" fill="#f02020"/>
<path d="M974.5 444.3C976.9 441.8 984.8 433.8 988.9 429.3C993.0 424.9 996.3 421.0 999.1 417.8C1001.9 414.5 1004.5 411.2 1005.6 409.9" fill="none" stroke="#f2ee26" stroke-width="1.1"/>
<path d="M1016.9 371.3C1018.5 367.9 1022.2 357.9 1026.4 350.8C1030.6 343.7 1035.6 336.5 1042.2 328.6C1048.8 320.7 1058.3 310.4 1066.0 303.3C1073.6 296.2 1079.7 292.0 1088.1 285.9C1096.6 279.8 1107.9 271.8 1116.6 266.9C1125.3 262.0 1133.5 258.9 1140.3 256.6C1147.2 254.4 1151.7 253.6 1157.7 253.5C1163.8 253.3 1170.4 254.1 1176.7 255.8C1183.1 257.5 1189.4 259.5 1195.7 263.7C1202.1 268.0 1209.2 274.6 1214.7 281.1C1220.3 287.7 1225.5 296.4 1229.0 303.3C1232.4 310.2 1234.1 316.5 1235.3 322.3C1236.5 328.1 1236.3 332.1 1236.1 338.1C1235.8 344.2 1235.2 351.8 1233.7 358.7C1232.3 365.5 1228.5 375.7 1227.4 379.3C1226.3 382.8 1229.1 375.9 1227.1 380.0C1225.0 384.1 1220.0 396.2 1215.1 403.8C1210.3 411.5 1203.8 419.7 1198.1 425.9C1192.5 432.2 1186.8 436.7 1181.1 441.2C1175.5 445.8 1169.8 449.7 1164.1 453.1C1158.4 456.5 1152.8 459.2 1147.1 461.6C1141.4 464.1 1135.8 465.9 1130.1 467.6C1124.4 469.3 1118.8 470.9 1113.1 471.9C1107.4 472.8 1101.7 473.4 1096.1 473.2C1090.4 473.1 1084.2 471.9 1079.1 471.0C1074.0 470.1 1069.3 468.7 1065.5 467.6C1061.6 466.5 1057.7 465.0 1056.1 464.5" fill="none" stroke="#f2ee26" stroke-width="1.1"/>
<polyline points="1056.1,464.5 1053.7,465.6 1054.6,467.1 1062.1,472.7 1079.1,484.6 1096.1,497.4 1116.5,515.2" fill="none" stroke="#f2ee26" stroke-width="1.1"/>
<path d="M1010.3 483.4C1011.9 482.6 1016.0 480.9 1019.5 478.7C1023.0 476.4 1028.0 473.0 1031.4 470.2C1034.8 467.3 1037.1 464.5 1039.9 461.6C1042.8 458.8 1044.8 455.4 1048.5 453.1C1052.1 450.9 1057.0 449.7 1062.1 448.0C1067.2 446.3 1073.4 444.9 1079.1 442.9C1084.7 441.0 1090.4 438.7 1096.1 436.1C1101.7 433.6 1107.4 430.9 1113.1 427.6C1118.8 424.4 1124.4 420.8 1130.1 416.6C1135.8 412.3 1142.0 406.8 1147.1 402.1C1152.2 397.4 1158.9 389.9 1160.7 388.5C1162.5 387.1 1155.9 395.6 1157.7 393.5C1159.6 391.4 1167.8 382.2 1172.0 376.1C1176.2 370.0 1180.2 363.4 1183.1 357.1C1186.0 350.8 1188.1 343.9 1189.4 338.1C1190.7 332.3 1191.1 327.0 1191.0 322.3C1190.8 317.5 1190.5 314.1 1188.6 309.6C1186.8 305.1 1184.0 300.1 1179.9 295.4C1175.8 290.6 1169.4 284.5 1164.1 281.1C1158.8 277.8 1153.5 276.4 1148.3 275.1C1143.0 273.9 1138.8 273.1 1132.4 273.5C1126.1 274.0 1117.7 275.8 1110.3 278.0C1102.9 280.2 1094.4 283.8 1088.1 286.7C1081.8 289.6 1076.0 292.6 1072.3 295.4C1068.6 298.2 1069.1 298.8 1066.0 303.3C1062.8 307.8 1056.7 315.4 1053.3 322.3C1049.9 329.1 1047.2 337.1 1045.4 344.4C1043.5 351.8 1042.8 360.3 1042.2 366.6C1041.7 372.9 1042.2 380.2 1042.2 382.4C1042.3 384.7 1042.0 377.6 1042.5 380.0C1043.0 382.4 1044.1 391.3 1045.0 397.0C1046.0 402.7 1046.7 409.2 1048.5 414.0C1050.2 418.8 1051.9 420.8 1055.3 425.9C1058.7 431.0 1064.9 439.3 1068.9 444.6C1072.8 450.0 1075.4 453.6 1079.1 458.2C1082.8 462.9 1086.7 467.3 1091.0 472.7C1095.2 478.1 1099.8 484.1 1104.6 490.6C1109.4 497.0 1117.3 507.9 1119.9 511.3" fill="none" stroke="#f2ee26" stroke-width="1.1"/>
<path d="M1009.7 485.8C1009.5 482.3 1008.9 471.3 1008.6 465.0C1008.4 458.8 1008.2 453.7 1008.1 448.0C1008.1 442.4 1008.3 437.3 1008.5 431.0C1008.7 424.8 1008.6 415.7 1009.3 410.6C1010.0 405.5 1011.3 403.1 1012.7 400.4C1014.1 397.7 1016.3 395.6 1017.8 394.5C1019.4 393.3 1020.8 393.2 1022.1 393.6C1023.4 394.0 1024.5 395.0 1025.5 397.0C1026.5 399.0 1027.0 401.3 1028.0 405.5C1029.0 409.8 1030.2 416.6 1031.4 422.5C1032.7 428.5 1034.3 435.0 1035.7 441.2C1037.1 447.5 1038.4 453.1 1039.9 459.9C1041.5 466.7 1043.3 475.0 1045.0 482.1C1046.7 489.1 1048.5 495.4 1050.2 502.5C1051.9 509.6 1053.7 517.8 1055.3 524.6C1056.8 531.4 1058.4 538.7 1059.5 543.3C1060.6 547.9 1061.2 548.9 1061.7 552.0C1062.3 555.1 1062.2 557.8 1062.7 562.0C1063.2 566.2 1064.3 574.5 1064.6 577.0" fill="none" stroke="#f2ee26" stroke-width="1.1"/>
<polyline points="974.5,444.3 994.0,441.6" fill="none" stroke="#25e625" stroke-width="1.4"/>
<polygon points="996.1,441.2 990.6,439.9 991.3,443.3" fill="#25e625"/>
<circle cx="1064.7" cy="577.5" r="1.2" fill="#25e625"/>
<polyline points="1025.3,700.0 1027.0,748.5" fill="none" stroke="#3d62f0" stroke-width="0.9"/>
<text x="1025.8" y="701.500" font-family="Liberation Sans" font-size="12" fill="#3d62f0">z</text>
<defs><linearGradient id="cf" x1="0" y1="0" x2="1" y2="1"><stop offset="0" stop-color="#b9b9b9"/><stop offset="1" stop-color="#8a8a8a"/></linearGradient><linearGradient id="cr" x1="0" y1="0" x2="1" y2="1"><stop offset="0" stop-color="#8d8d8d"/><stop offset="1" stop-color="#a5a5a5"/></linearGradient></defs>
<polygon points="1512.5,184.0 1556.2,197.5 1560.5,202.5 1563.8,250.0 1536.2,272.0 1528.8,274.5 1485.0,261.2 1482.0,256.2 1479.5,212.5 1483.0,208.0" fill="#7d7d7d"/>
<polygon points="1512.5,185.0 1554.5,198.2 1527.5,220.5 1485.5,208.0" fill="#f7f7f7"/>
<polygon points="1481.2,216.2 1525.0,229.5 1527.0,272.0 1486.0,260.0 1483.0,255.5" fill="url(#cf)"/>
<polygon points="1525.0,229.5 1533.8,228.0 1535.5,270.5 1529.0,274.0 1527.0,272.0" fill="#171717"/>
<polygon points="1533.8,227.5 1561.0,205.5 1563.2,249.5 1536.0,270.5" fill="url(#cr)"/>
<polyline points="1485.0,261.2 1528.8,274.5" fill="none" stroke="#111" stroke-width="1"/>
<text transform="matrix(.95,.3,-.75,.55,1524,202)" font-family="Liberation Sans" font-size="11" fill="#333" text-anchor="middle">下</text>
<text transform="matrix(.95,.3,0,1,1503,252)" font-family="Liberation Sans" font-size="12" fill="#333" text-anchor="middle">后</text>
<text transform="matrix(.8,-.65,0,1,1550,246)" font-family="Liberation Sans" font-size="11" fill="#333" text-anchor="middle">左</text>
<polyline points="1575.0,252.5 1572.2,205.5" fill="none" stroke="#8585c4" stroke-width="1.2"/>
<polygon points="1572.0,194.5 1569.5,207.0 1575.2,206.5" fill="#7f7fc8"/>
<polyline points="1575.0,253.0 1561.5,249.0" fill="none" stroke="#e06060" stroke-width="1"/>
<polyline points="1575.0,254.0 1545.0,279.5" fill="none" stroke="#5fd35f" stroke-width="1.2"/>
<polygon points="1538.0,284.5 1543.8,277.0 1548.0,281.5" fill="#6ad86a"/>
<circle cx="1575" cy="253" r="3.800" fill="#f4f4f4"/><circle cx="1575.500" cy="254.200" r="3.800" fill="none" stroke="#999" stroke-width=".5"/>
<text x="1575" y="183.500" font-family="Liberation Serif" font-size="16" fill="#f2ee26" text-anchor="middle">Z</text>
<text x="1534.500" y="293.500" font-family="Liberation Serif" font-size="16" fill="#f2ee26" text-anchor="middle">Y</text>
</svg>
<div class="a" style="left:835px;top:139px;width:400px;height:6px;background:#716d6d"></div>
<div class="a" style="left:835px;top:145px;width:400px;height:44px;background:#8f8a8a"></div>
<svg style="left:835px;top:145px" width="400" height="44"><circle cx="49.500" cy="18.800" r="12.500" fill="none" stroke="#0c0c0c" stroke-width="1.8"/><polygon points="45.500,12.500 45.500,25 55,18.800" fill="#0c0c0c"/><rect x="70.500" y="4.500" width="29" height="29" fill="none" stroke="#5a5656" stroke-width="1"/><circle cx="85" cy="19" r="12" fill="none" stroke="#e0272b" stroke-width="1.5"/><rect x="80" y="14" width="10" height="10" fill="#e0272b"/><rect x="108.500" y="9.500" width="49" height="19" rx="1.500" fill="#27272a" stroke="#b8b8b8" stroke-width="1"/><text x="132" y="24.500" font-family="Liberation Sans" font-size="15.500" fill="#fff" text-anchor="middle" letter-spacing="1">4x</text><rect x="167.500" y="16.800" width="190" height="4.200" fill="#eaeaea"/><rect x="198" y="10.500" width="10.500" height="17" fill="#f0f0f0" stroke="#bdbdbd" stroke-width=".6"/></svg>

</body></html>
